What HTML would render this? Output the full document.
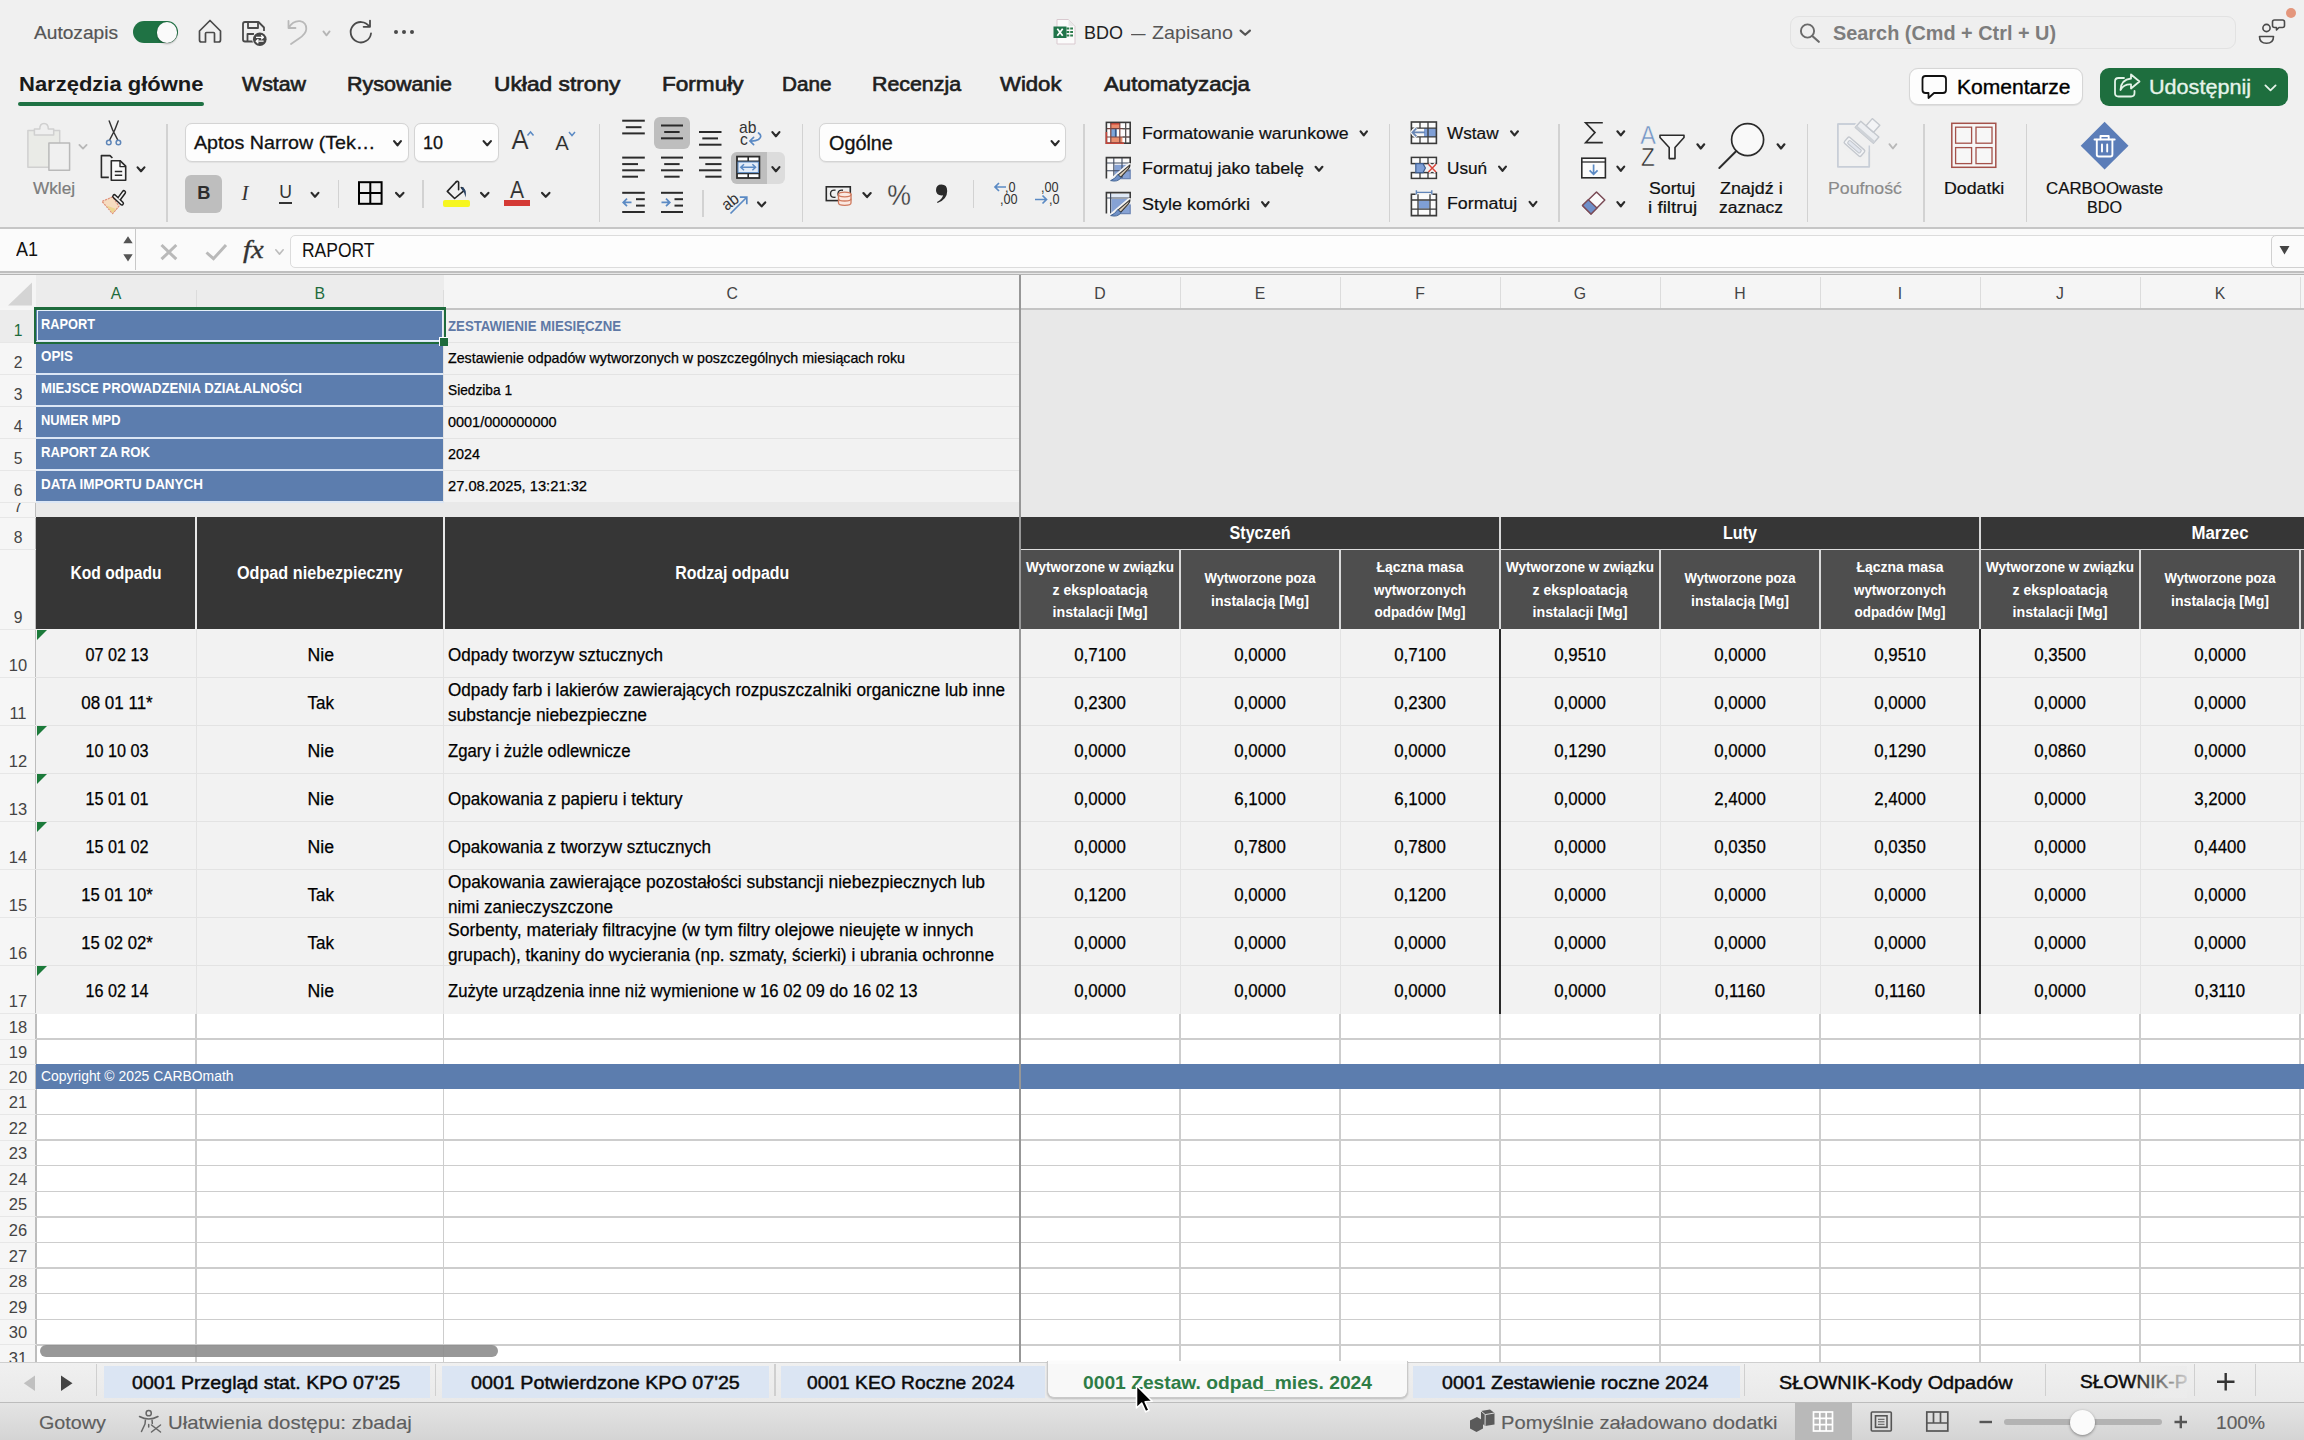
<!DOCTYPE html>
<html lang="pl"><head><meta charset="utf-8"><title>BDO</title>
<style>
html,body{margin:0;padding:0;}
body{width:2304px;height:1440px;overflow:hidden;background:#f0f0f0;font-family:"Liberation Sans",sans-serif;position:relative;}
.a{position:absolute;box-sizing:border-box;}
.t{white-space:nowrap;overflow:visible;}
.w{white-space:normal;}
.d{-webkit-text-stroke:.25px #000;}
svg{overflow:visible;}
</style></head><body>
<div class="a" style="left:0px;top:0px;width:2304px;height:228px;background:#f0f0f0;"></div>
<div class="a t " style="left:34px;top:20.8px;width:80.85269899359561px;height:24px;line-height:24px;font-size:17.5px;text-align:left;color:#555;font-weight:400;transform:scaleX(1.093);transform-origin:0 50%;-webkit-text-stroke:0.2px #555;">Autozapis</div>
<div class="a" style="left:133px;top:21px;width:45px;height:22px;background:#1f7244;border-radius:11px;"></div>
<div class="a" style="left:156.5px;top:22px;width:20.5px;height:20.5px;background:#fafafa;border-radius:50%;box-shadow:0 1px 2px rgba(0,0,0,.35);"></div>
<svg class="a" style="left:0px;top:0px;" width="1" height="1" viewBox="0 0 1 1"><path d="M199.5 31 L210 20.5 L220.5 31 L220.5 40 Q220.5 42 218.5 42 L214.5 42 L214.5 33.5 Q214.5 32.5 213.5 32.5 L206.5 32.5 Q205.5 32.5 205.5 33.5 L205.5 42 L201.5 42 Q199.5 42 199.5 40 Z" fill="none" stroke="#4a4a4a" stroke-width="1.7" stroke-linejoin="round"/></svg>
<svg class="a" style="left:0px;top:0px;" width="1" height="1" viewBox="0 0 1 1"><g fill="none" stroke="#4a4a4a" stroke-width="1.8" stroke-linejoin="round"><path d="M254 41.5 L245 41.5 Q243 41.5 243 39.5 L243 24 Q243 22 245 22 L258.5 22 L264 27.5 L264 31"/><path d="M248 22 L248 28 L258 28 L258 22"/><path d="M247.5 41.5 L247.5 34 L254 34"/></g><circle cx="259.8" cy="39.2" r="7.6" fill="#f0f0f0"/><circle cx="259.8" cy="39.2" r="6.8" fill="#474747"/><path d="M256 37.3 L263 37.3 M261.2 35.3 L263.4 37.3 L261.2 39.3 M263.6 41.2 L256.6 41.2 M258.4 39.2 L256.2 41.2 L258.4 43.2" fill="none" stroke="#fff" stroke-width="1.3" stroke-linejoin="round"/></svg>
<svg class="a" style="left:0px;top:0px;" width="1" height="1" viewBox="0 0 1 1"><path d="M288.5 21 L288.5 28 L295.5 28 M288.8 27.6 Q293 20.5 300 21.2 Q306.5 22.5 306.3 29 Q306 34 299 38.5 L291 44" fill="none" stroke="#b9b9b9" stroke-width="1.8" stroke-linecap="round" stroke-linejoin="round"/></svg>
<svg class="a" style="left:0px;top:0px;" width="1" height="1" viewBox="0 0 1 1"><path d="M323.40 31.40 L326.50 35.32 L329.60 31.40" fill="none" stroke="#b5b5b5" stroke-width="1.8" stroke-linecap="round" stroke-linejoin="round"/></svg>
<svg class="a" style="left:0px;top:0px;" width="1" height="1" viewBox="0 0 1 1"><path d="M369.4 26.6 A10.2 10.2 0 1 0 371 33.5 M363.6 26.8 L370 26.8 L370 20.6" fill="none" stroke="#4a4a4a" stroke-width="1.8" stroke-linecap="round" stroke-linejoin="round"/></svg>
<div class="a" style="left:393.5px;top:30px;width:4px;height:4px;background:#4a4a4a;border-radius:50%;"></div>
<div class="a" style="left:401.5px;top:30px;width:4px;height:4px;background:#4a4a4a;border-radius:50%;"></div>
<div class="a" style="left:409.5px;top:30px;width:4px;height:4px;background:#4a4a4a;border-radius:50%;"></div>
<svg class="a" style="left:0px;top:0px;" width="1" height="1" viewBox="0 0 1 1"><path d="M1057 19.5 L1068.5 19.5 L1075 26 L1075 44 L1057 44 Z" fill="#fbfbfb" stroke="#d9c9cf" stroke-width="1"/><path d="M1068.5 19.5 L1068.5 26 L1075 26 Z" fill="#e9e9e9"/><g fill="#2d7d4d"><rect x="1066.5" y="27.5" width="6.5" height="2"/><rect x="1066.5" y="31" width="6.5" height="2"/><rect x="1066.5" y="34.5" width="6.5" height="2"/></g><rect x="1069.3" y="27" width="0.9" height="10" fill="#fbfbfb"/><rect x="1053.5" y="26.5" width="13" height="11.5" fill="#20744a"/><path d="M1057.3 28.8 L1062.7 35.8 M1062.7 28.8 L1057.3 35.8" stroke="#fff" stroke-width="1.7"/></svg>
<div class="a t " style="left:1084px;top:21.3px;width:44.09046052631579px;height:24px;line-height:24px;font-size:18.5px;text-align:left;color:#222;font-weight:400;transform:scaleX(0.9728);transform-origin:0 50%;">BDO</div>
<div class="a t " style="left:1130.5px;top:21.3px;width:22.49961724929829px;height:24px;line-height:24px;font-size:18.5px;text-align:left;color:#555;font-weight:400;transform:scaleX(0.7838);transform-origin:0 50%;">—</div>
<div class="a t " style="left:1152px;top:21.3px;width:80.1063609884431px;height:24px;line-height:24px;font-size:18.5px;text-align:left;color:#555;font-weight:400;transform:scaleX(1.0643);transform-origin:0 50%;">Zapisano</div>
<svg class="a" style="left:0px;top:0px;" width="1" height="1" viewBox="0 0 1 1"><path d="M1240.60 30.60 L1245.25 34.78 L1249.90 30.60" fill="none" stroke="#555" stroke-width="2.2" stroke-linecap="round" stroke-linejoin="round"/></svg>
<div class="a" style="left:1789.5px;top:15.5px;width:446.5px;height:33px;background:#efefef;border:1px solid #e2e2e2;border-radius:9px;"></div>
<svg class="a" style="left:0px;top:0px;" width="1" height="1" viewBox="0 0 1 1"><circle cx="1807.5" cy="31" r="6.6" fill="none" stroke="#6a6a6a" stroke-width="1.9"/><path d="M1812.3 36 L1818.8 41.8" stroke="#6a6a6a" stroke-width="2.2" stroke-linecap="round"/></svg>
<div class="a t " style="left:1832.5px;top:21.3px;width:222.88496270121712px;height:24px;line-height:24px;font-size:19.5px;text-align:left;color:#7d7d7d;font-weight:700;transform:scaleX(1.0188);transform-origin:0 50%;">Search (Cmd + Ctrl + U)</div>
<svg class="a" style="left:0px;top:0px;" width="1" height="1" viewBox="0 0 1 1"><g fill="none" stroke="#4a4a4a" stroke-width="1.6" stroke-linejoin="round"><circle cx="2266.5" cy="28" r="3.6"/><path d="M2259.5 36.5 L2273.5 36.5 Q2273.5 43.3 2266.5 43.3 Q2259.5 43.3 2259.5 36.5 Z"/><path d="M2274.5 20 L2282.5 20 Q2284.5 20 2284.5 22 L2284.5 25.5 Q2284.5 27.5 2282.5 27.5 L2279 27.5 L2276.5 30 L2276.5 27.5 L2274.5 27.5 Q2272.5 27.5 2272.5 25.5 L2272.5 22 Q2272.5 20 2274.5 20 Z"/></g></svg>
<div class="a" style="left:2286px;top:8px;width:10px;height:10px;background:#e4967c;border-radius:50%;"></div>
<div class="a t " style="left:18.5px;top:70px;width:200px;height:28px;line-height:28px;font-size:20px;text-align:left;color:#1a1a1a;font-weight:700;transform:scaleX(1.0994);transform-origin:0 50%;">Narzędzia główne</div>
<div class="a" style="left:18px;top:101.5px;width:185.5px;height:4px;background:#1f7244;border-radius:2px;"></div>
<div class="a t " style="left:242px;top:69.8px;width:63.99812505859192px;height:28px;line-height:28px;font-size:20px;text-align:left;color:#1e1e1e;font-weight:400;transform:scaleX(1.0667);transform-origin:0 50%;-webkit-text-stroke:0.65px #1e1e1e;">Wstaw</div>
<div class="a t " style="left:347px;top:69.8px;width:101.82912512810958px;height:28px;line-height:28px;font-size:20px;text-align:left;color:#1e1e1e;font-weight:400;transform:scaleX(1.0733);transform-origin:0 50%;-webkit-text-stroke:0.65px #1e1e1e;">Rysowanie</div>
<div class="a t " style="left:493.5px;top:69.8px;width:115.15016255162114px;height:28px;line-height:28px;font-size:20px;text-align:left;color:#1e1e1e;font-weight:400;transform:scaleX(1.1381);transform-origin:0 50%;-webkit-text-stroke:0.65px #1e1e1e;">Układ strony</div>
<div class="a t " style="left:661.5px;top:69.8px;width:76.2325622618098px;height:28px;line-height:28px;font-size:20px;text-align:left;color:#1e1e1e;font-weight:400;transform:scaleX(1.1283);transform-origin:0 50%;-webkit-text-stroke:0.65px #1e1e1e;">Formuły</div>
<div class="a t " style="left:781.5px;top:69.8px;width:51.8122283396117px;height:28px;line-height:28px;font-size:20px;text-align:left;color:#1e1e1e;font-weight:400;transform:scaleX(1.0353);transform-origin:0 50%;-webkit-text-stroke:0.65px #1e1e1e;">Dane</div>
<div class="a t " style="left:871.5px;top:69.8px;width:87.38017612891139px;height:28px;line-height:28px;font-size:20px;text-align:left;color:#1e1e1e;font-weight:400;transform:scaleX(1.0674);transform-origin:0 50%;-webkit-text-stroke:0.65px #1e1e1e;">Recenzja</div>
<div class="a t " style="left:999.5px;top:69.8px;width:59.56559450668594px;height:28px;line-height:28px;font-size:20px;text-align:left;color:#1e1e1e;font-weight:400;transform:scaleX(1.1068);transform-origin:0 50%;-webkit-text-stroke:0.65px #1e1e1e;">Widok</div>
<div class="a t " style="left:1103.5px;top:69.8px;width:135.1769991015274px;height:28px;line-height:28px;font-size:20px;text-align:left;color:#1e1e1e;font-weight:400;transform:scaleX(1.113);transform-origin:0 50%;-webkit-text-stroke:0.65px #1e1e1e;">Automatyzacja</div>
<div class="a" style="left:1908.5px;top:68px;width:174px;height:37px;background:#fdfdfd;border:1px solid #d6d6d6;border-radius:9px;box-shadow:0 .5px 1px rgba(0,0,0,.08);"></div>
<svg class="a" style="left:0px;top:0px;" width="1" height="1" viewBox="0 0 1 1"><path d="M1925.5 76 L1943 76 Q1946 76 1946 79 L1946 90 Q1946 93 1943 93 L1934 93 L1928.5 98 L1928.5 93 L1925.5 93 Q1922.5 93 1922.5 90 L1922.5 79 Q1922.5 76 1925.5 76 Z" fill="none" stroke="#111" stroke-width="1.8" stroke-linejoin="round"/></svg>
<div class="a t " style="left:1957px;top:73.3px;width:111.83847980997625px;height:28px;line-height:28px;font-size:20px;text-align:left;color:#000;font-weight:400;transform:scaleX(1.0525);transform-origin:0 50%;-webkit-text-stroke:0.35px #000;">Komentarze</div>
<div class="a" style="left:2099.5px;top:67.5px;width:188px;height:38px;background:#1e6e3e;border-radius:9px;"></div>
<svg class="a" style="left:0px;top:0px;" width="1" height="1" viewBox="0 0 1 1"><g fill="none" stroke="#e4f3e8" stroke-width="1.8" stroke-linejoin="round" stroke-linecap="round"><path d="M2124 78 L2118.5 78 Q2115 78 2115 81.5 L2115 93 Q2115 96.5 2118.5 96.5 L2131 96.5 Q2134.5 96.5 2134.5 93 L2134.5 91"/><path d="M2131 74.5 L2139.5 81.5 L2131 88.5 L2131 84.5 Q2124 84 2120.5 90 Q2121 79.5 2131 78.5 Z"/></g></svg>
<div class="a t " style="left:2149px;top:73.3px;width:98.50569813768183px;height:28px;line-height:28px;font-size:20px;text-align:left;color:#e6f4ea;font-weight:400;transform:scaleX(1.0793);transform-origin:0 50%;-webkit-text-stroke:0.35px #e6f4ea;">Udostępnij</div>
<svg class="a" style="left:0px;top:0px;" width="1" height="1" viewBox="0 0 1 1"><path d="M2265.40 85.40 L2270.50 90.32 L2275.60 85.40" fill="none" stroke="#e6f4ea" stroke-width="1.8" stroke-linecap="round" stroke-linejoin="round"/></svg>
<svg class="a" style="left:0px;top:0px;" width="1" height="1" viewBox="0 0 1 1"><g stroke-width="1.5" stroke-linejoin="round"><path d="M27.9 130.4 L59.7 130.4 L59.7 167.2 L27.9 167.2 Z" fill="#eaebe7" stroke="#d0d0d0"/><path d="M34.4 135 L34.4 128.9 L39.8 128.9 Q39.8 123.5 44 123.5 Q48.3 123.5 48.3 128.9 L53.7 128.9 L53.7 135 Z" fill="#efefef" stroke="#d0d0d0"/><path d="M48.9 143.1 L69.6 143.1 L69.6 170.2 L48.9 170.2 Z" fill="#f0f0f0" stroke="#b9b9b9"/></g></svg>
<svg class="a" style="left:0px;top:0px;" width="1" height="1" viewBox="0 0 1 1"><path d="M79.40 144.90 L83.00 148.62 L86.60 144.90" fill="none" stroke="#b8b8b8" stroke-width="1.8" stroke-linecap="round" stroke-linejoin="round"/></svg>
<div class="a t " style="left:33px;top:176.8px;width:43.10978675854362px;height:24px;line-height:24px;font-size:16px;text-align:left;color:#7c7c7c;font-weight:400;transform:scaleX(1.0739);transform-origin:0 50%;-webkit-text-stroke:0.2px #7c7c7c;">Wklej</div>
<svg class="a" style="left:0px;top:0px;" width="1" height="1" viewBox="0 0 1 1"><g fill="none" stroke-linecap="round"><path d="M109.2 121 Q112 130 117.6 139.6 M118.2 121 Q115.4 130 109.8 139.6" stroke="#333" stroke-width="1.4"/><circle cx="108.8" cy="142.5" r="2.3" stroke="#5f86b8" stroke-width="1.5"/><circle cx="118.4" cy="142.5" r="2.3" stroke="#5f86b8" stroke-width="1.5"/></g></svg>
<svg class="a" style="left:0px;top:0px;" width="1" height="1" viewBox="0 0 1 1"><g fill="none" stroke="#2a2a2a" stroke-width="1.6" stroke-linejoin="round"><path d="M108.8 177.4 L101.4 177.4 L101.4 155.6 L110 155.6 L112.4 158"/><path d="M111.3 160.7 L120 160.7 L125.7 166.2 L125.7 180.3 L111.3 180.3 Z" fill="#f8f8f8"/><path d="M120 160.7 L120 166.6 L125.7 166.6" stroke-width="1.4"/><path d="M114.8 171.5 L122.2 171.5 M114.8 175.2 L122.2 175.2" stroke-width="1.5"/></g></svg>
<svg class="a" style="left:0px;top:0px;" width="1" height="1" viewBox="0 0 1 1"><path d="M137.60 167.40 L141.00 171.28 L144.40 167.40" fill="none" stroke="#2b2b2b" stroke-width="2.2" stroke-linecap="round" stroke-linejoin="round"/></svg>
<svg class="a" style="left:0px;top:0px;" width="1" height="1" viewBox="0 0 1 1"><path d="M112.6 196.9 L102 201.4 L112.6 213.6 L119 206.2 Z" fill="#f6dcc0" stroke="#df8f78" stroke-width="1.2" stroke-linejoin="round" stroke-dasharray="2.2 0.8"/><path d="M106.5 205.5 L112.6 213 L116 209 Z" fill="#ecd58f"/><g fill="none" stroke-linecap="round"><path d="M123.9 192.3 L119.3 198.6" stroke="#222" stroke-width="4.6"/><path d="M114.4 196.3 L121.8 203.3" stroke="#222" stroke-width="4.6"/><path d="M123.9 192.3 L119.3 198.6" stroke="#f4f4f4" stroke-width="1.7"/><path d="M114.4 196.3 L121.8 203.3" stroke="#f4f4f4" stroke-width="1.7"/></g></svg>
<div class="a" style="left:166.25px;top:123.5px;width:1.5px;height:98.0px;background:#d2d2d2;"></div>
<div class="a" style="left:184.5px;top:123px;width:224.5px;height:38.5px;background:#fdfdfd;border:1px solid #d4d4d4;border-radius:7px;box-shadow:0 .5px 1px rgba(0,0,0,.06);"></div>
<div class="a t " style="left:194px;top:129.8px;width:179.26071842410195px;height:26px;line-height:26px;font-size:19px;text-align:left;color:#111;font-weight:400;transform:scaleX(1.0356);transform-origin:0 50%;-webkit-text-stroke:0.3px #111;">Aptos Narrow (Tek…</div>
<svg class="a" style="left:0px;top:0px;" width="1" height="1" viewBox="0 0 1 1"><path d="M394.10 141.10 L397.50 145.28 L400.90 141.10" fill="none" stroke="#2b2b2b" stroke-width="2.2" stroke-linecap="round" stroke-linejoin="round"/></svg>
<div class="a" style="left:413.5px;top:123px;width:85px;height:38.5px;background:#fdfdfd;border:1px solid #d4d4d4;border-radius:7px;box-shadow:0 .5px 1px rgba(0,0,0,.06);"></div>
<div class="a t " style="left:422.5px;top:129.8px;width:25.134946634259748px;height:26px;line-height:26px;font-size:19px;text-align:left;color:#111;font-weight:400;transform:scaleX(0.9463);transform-origin:0 50%;-webkit-text-stroke:0.3px #111;">10</div>
<svg class="a" style="left:0px;top:0px;" width="1" height="1" viewBox="0 0 1 1"><path d="M483.60 141.10 L487.25 145.28 L490.90 141.10" fill="none" stroke="#2b2b2b" stroke-width="2.2" stroke-linecap="round" stroke-linejoin="round"/></svg>
<div class="a t " style="left:508px;top:125px;width:24px;height:30px;line-height:30px;font-size:27px;text-align:center;color:#2a2a2a;font-weight:400;transform:scaleX(0.95);transform-origin:50% 50%;line-height:30px;-webkit-text-stroke:.2px #f0f0f0;">A</div>
<svg class="a" style="left:0px;top:0px;" width="1" height="1" viewBox="0 0 1 1"><path d="M527.5 135.5 L530.5 132 L533.5 135.5" fill="none" stroke="#5b8ac4" stroke-width="1.5"/></svg>
<div class="a t " style="left:551px;top:129.5px;width:22px;height:26px;line-height:26px;font-size:21px;text-align:center;color:#2a2a2a;font-weight:400;transform:scaleX(0.97);transform-origin:50% 50%;-webkit-text-stroke:.15px #f0f0f0;">A</div>
<svg class="a" style="left:0px;top:0px;" width="1" height="1" viewBox="0 0 1 1"><path d="M569 132 L572 135.5 L575 132" fill="none" stroke="#5b8ac4" stroke-width="1.5"/></svg>
<div class="a" style="left:184.5px;top:174.5px;width:37.5px;height:38px;background:#bebebe;border-radius:6px;"></div>
<div class="a t " style="left:184.5px;top:180px;width:37.5px;height:26px;line-height:26px;font-size:19px;text-align:center;color:#2d2d2d;font-weight:700;transform:scaleX(0.96);transform-origin:50% 50%;">B</div>
<div class="a t " style="left:232px;top:180px;width:26px;height:26px;line-height:26px;font-size:21px;text-align:center;color:#333;font-weight:400;font-family:'Liberation Serif',serif;font-style:italic;">I</div>
<div class="a t " style="left:273px;top:179px;width:25px;height:26px;line-height:26px;font-size:18.5px;text-align:center;color:#333;font-weight:400;transform:scaleX(0.95);transform-origin:50% 50%;">U</div>
<div class="a" style="left:279px;top:202px;width:13px;height:1.6px;background:#333;"></div>
<svg class="a" style="left:0px;top:0px;" width="1" height="1" viewBox="0 0 1 1"><path d="M311.60 192.90 L315.00 196.78 L318.40 192.90" fill="none" stroke="#2b2b2b" stroke-width="2.2" stroke-linecap="round" stroke-linejoin="round"/></svg>
<div class="a" style="left:337.55px;top:179.5px;width:1.5px;height:28.0px;background:#d2d2d2;"></div>
<svg class="a" style="left:0px;top:0px;" width="1" height="1" viewBox="0 0 1 1"><g fill="none" stroke="#000" stroke-width="2"><rect x="359" y="182.2" width="22.6" height="21.6"/><path d="M370.3 182.2 L370.3 203.8 M359 193 L381.6 193"/></g></svg>
<svg class="a" style="left:0px;top:0px;" width="1" height="1" viewBox="0 0 1 1"><path d="M396.10 192.90 L399.75 196.78 L403.40 192.90" fill="none" stroke="#2b2b2b" stroke-width="2.2" stroke-linecap="round" stroke-linejoin="round"/></svg>
<div class="a" style="left:422.25px;top:179.5px;width:1.5px;height:28.0px;background:#d2d2d2;"></div>
<svg class="a" style="left:0px;top:0px;" width="1" height="1" viewBox="0 0 1 1"><g fill="none" stroke="#222" stroke-width="1.6" stroke-linejoin="round" stroke-linecap="round"><path d="M455.8 182.3 L447.3 191.4 L454.6 198.5 L464.3 190.3 L461.3 187.5"/><path d="M455.8 182.3 Q457.2 180.1 458.6 182.3 L458.6 189.8"/></g><path d="M462.2 187.3 Q467 189 465.6 197.4 Q464.6 192.2 461.8 189.4 Z" fill="#2d4565"/><circle cx="462.6" cy="188.3" r="1.2" fill="#2d4565"/></svg>
<div class="a" style="left:443px;top:199.6px;width:27.4px;height:7px;background:#f6f620;border-radius:2px;"></div>
<svg class="a" style="left:0px;top:0px;" width="1" height="1" viewBox="0 0 1 1"><path d="M481.10 192.90 L484.75 196.78 L488.40 192.90" fill="none" stroke="#2b2b2b" stroke-width="2.2" stroke-linecap="round" stroke-linejoin="round"/></svg>
<div class="a t " style="left:505px;top:178.2px;width:24px;height:24px;line-height:24px;font-size:23.5px;text-align:center;color:#2e2e2e;font-weight:400;transform:scaleX(0.9);transform-origin:50% 50%;-webkit-text-stroke:.15px #f0f0f0;">A</div>
<div class="a" style="left:504.2px;top:200px;width:25.8px;height:6px;background:#d43a35;"></div>
<svg class="a" style="left:0px;top:0px;" width="1" height="1" viewBox="0 0 1 1"><path d="M542.10 192.90 L545.75 196.78 L549.40 192.90" fill="none" stroke="#2b2b2b" stroke-width="2.2" stroke-linecap="round" stroke-linejoin="round"/></svg>
<div class="a" style="left:598.75px;top:123.5px;width:1.5px;height:98.0px;background:#d2d2d2;"></div>
<div class="a" style="left:654px;top:117px;width:35.5px;height:31.8px;background:#bebebe;border-radius:6px;"></div>
<svg class="a" style="left:0px;top:0px;" width="1" height="1" viewBox="0 0 1 1"><path d="M622.2 120.7 L644.8 120.7" stroke="#2b2b2b" stroke-width="2"/><path d="M625.8 127.2 L641.5 127.2" stroke="#2b2b2b" stroke-width="2"/><path d="M622.2 133.4 L644.8 133.4" stroke="#2b2b2b" stroke-width="2"/></svg>
<svg class="a" style="left:0px;top:0px;" width="1" height="1" viewBox="0 0 1 1"><path d="M661 125.5 L683 125.5" stroke="#2b2b2b" stroke-width="2"/><path d="M664.2 132 L679.6 132" stroke="#2b2b2b" stroke-width="2"/><path d="M661 138.3 L683 138.3" stroke="#2b2b2b" stroke-width="2"/></svg>
<svg class="a" style="left:0px;top:0px;" width="1" height="1" viewBox="0 0 1 1"><path d="M699 132 L721.5 132" stroke="#2b2b2b" stroke-width="2"/><path d="M702.3 138.4 L718 138.4" stroke="#2b2b2b" stroke-width="2"/><path d="M699 144.7 L721.5 144.7" stroke="#2b2b2b" stroke-width="2"/></svg>
<svg class="a" style="left:0px;top:0px;" width="1" height="1" viewBox="0 0 1 1"><path d="M622.2 157.6 L644.8 157.6" stroke="#2b2b2b" stroke-width="2"/><path d="M622.2 164.1 L638 164.1" stroke="#2b2b2b" stroke-width="2"/><path d="M622.2 170.3 L644.8 170.3" stroke="#2b2b2b" stroke-width="2"/><path d="M622.2 176.7 L638 176.7" stroke="#2b2b2b" stroke-width="2"/></svg>
<svg class="a" style="left:0px;top:0px;" width="1" height="1" viewBox="0 0 1 1"><path d="M661 157.6 L683 157.6" stroke="#2b2b2b" stroke-width="2"/><path d="M664.2 164.1 L679.6 164.1" stroke="#2b2b2b" stroke-width="2"/><path d="M661 170.3 L683 170.3" stroke="#2b2b2b" stroke-width="2"/><path d="M664.2 176.7 L679.6 176.7" stroke="#2b2b2b" stroke-width="2"/></svg>
<svg class="a" style="left:0px;top:0px;" width="1" height="1" viewBox="0 0 1 1"><path d="M699 157.6 L721.5 157.6" stroke="#2b2b2b" stroke-width="2"/><path d="M705.3 164.1 L721.5 164.1" stroke="#2b2b2b" stroke-width="2"/><path d="M699 170.3 L721.5 170.3" stroke="#2b2b2b" stroke-width="2"/><path d="M705.3 176.7 L721.5 176.7" stroke="#2b2b2b" stroke-width="2"/></svg>
<svg class="a" style="left:0px;top:0px;" width="1" height="1" viewBox="0 0 1 1"><path d="M622.2 192.8 L644.8 192.8" stroke="#2b2b2b" stroke-width="2"/><path d="M636 199.2 L644.8 199.2" stroke="#2b2b2b" stroke-width="2"/><path d="M636 205.6 L644.8 205.6" stroke="#2b2b2b" stroke-width="2"/><path d="M622.2 212 L644.8 212" stroke="#2b2b2b" stroke-width="2"/></svg>
<svg class="a" style="left:0px;top:0px;" width="1" height="1" viewBox="0 0 1 1"><path d="M661 192.8 L683 192.8" stroke="#2b2b2b" stroke-width="2"/><path d="M674.5 199.2 L683 199.2" stroke="#2b2b2b" stroke-width="2"/><path d="M674.5 205.6 L683 205.6" stroke="#2b2b2b" stroke-width="2"/><path d="M661 212 L683 212" stroke="#2b2b2b" stroke-width="2"/></svg>
<svg class="a" style="left:0px;top:0px;" width="1" height="1" viewBox="0 0 1 1"><path d="M631.5 202.4 L623.5 202.4 M627 198.6 L623.2 202.4 L627 206.2" fill="none" stroke="#5b8ac4" stroke-width="1.7"/><path d="M661.5 202.4 L669.5 202.4 M666 198.6 L669.8 202.4 L666 206.2" fill="none" stroke="#5b8ac4" stroke-width="1.7"/></svg>
<div class="a" style="left:702.25px;top:189.5px;width:1.5px;height:27.19999999999999px;background:#d2d2d2;"></div>
<div class="a t " style="left:739px;top:118.5px;width:24px;height:18px;line-height:18px;font-size:17px;text-align:left;color:#333;font-weight:400;transform:scaleX(0.92);transform-origin:0 50%;">ab</div>
<div class="a t " style="left:739.5px;top:130.5px;width:12px;height:18px;line-height:18px;font-size:17px;text-align:left;color:#333;font-weight:400;transform:scaleX(0.92);transform-origin:0 50%;">c</div>
<svg class="a" style="left:0px;top:0px;" width="1" height="1" viewBox="0 0 1 1"><path d="M758.5 133 Q763 136 758.5 139.5 Q755.5 141.3 750 141 M753.6 137.4 L749.8 141 L753.6 144.6" fill="none" stroke="#5b8ac4" stroke-width="1.7" stroke-linecap="round" stroke-linejoin="round"/></svg>
<svg class="a" style="left:0px;top:0px;" width="1" height="1" viewBox="0 0 1 1"><path d="M772.40 132.10 L775.90 136.28 L779.40 132.10" fill="none" stroke="#2b2b2b" stroke-width="2.2" stroke-linecap="round" stroke-linejoin="round"/></svg>
<div class="a" style="left:731px;top:152.3px;width:54px;height:31.5px;background:#dcdcdc;border-radius:6px;"></div>
<div class="a" style="left:731px;top:152.3px;width:35.5px;height:31.5px;background:#bebebe;border-radius:6px 0 0 6px;"></div>
<svg class="a" style="left:0px;top:0px;" width="1" height="1" viewBox="0 0 1 1"><rect x="737" y="156.6" width="22.4" height="21.4" fill="#fff" stroke="#2b2b2b" stroke-width="1.8"/><path d="M737 161.2 L759.4 161.2 M737 173.4 L759.4 173.4 M748.2 156.6 L748.2 161.2 M748.2 173.4 L748.2 178" stroke="#2b2b2b" stroke-width="1.6" fill="none"/><rect x="738" y="162" width="20.4" height="10.6" fill="#e3ecf8" stroke="#5b8ac4" stroke-width="1"/><path d="M741 167.3 L755.4 167.3 M744 164.3 L740.8 167.3 L744 170.3 M752.4 164.3 L755.6 167.3 L752.4 170.3" fill="none" stroke="#5b8ac4" stroke-width="1.5"/></svg>
<svg class="a" style="left:0px;top:0px;" width="1" height="1" viewBox="0 0 1 1"><path d="M772.40 167.10 L775.90 171.28 L779.40 167.10" fill="none" stroke="#2b2b2b" stroke-width="2.2" stroke-linecap="round" stroke-linejoin="round"/></svg>
<div class="a t" style="left:719px;top:188px;width:30px;height:20px;line-height:20px;font-size:16.5px;color:#333;transform:rotate(-38deg) scaleX(.92);transform-origin:50% 50%;">ab</div>
<svg class="a" style="left:0px;top:0px;" width="1" height="1" viewBox="0 0 1 1"><path d="M730.5 213.5 L746.5 197.5 M739.8 197.2 L746.8 197.2 L746.8 204.2" fill="none" stroke="#5b8ac4" stroke-width="1.7"/></svg>
<svg class="a" style="left:0px;top:0px;" width="1" height="1" viewBox="0 0 1 1"><path d="M758.10 202.40 L761.65 206.38 L765.20 202.40" fill="none" stroke="#2b2b2b" stroke-width="2.2" stroke-linecap="round" stroke-linejoin="round"/></svg>
<div class="a" style="left:801.55px;top:123.5px;width:1.5px;height:98.0px;background:#d2d2d2;"></div>
<div class="a" style="left:819.2px;top:123px;width:247px;height:38.5px;background:#fdfdfd;border:1px solid #d4d4d4;border-radius:7px;box-shadow:0 .5px 1px rgba(0,0,0,.06);"></div>
<div class="a t " style="left:829.2px;top:129.8px;width:66.88192391090081px;height:26px;line-height:26px;font-size:19.5px;text-align:left;color:#111;font-weight:400;transform:scaleX(1.0146);transform-origin:0 50%;-webkit-text-stroke:0.3px #111;">Ogólne</div>
<svg class="a" style="left:0px;top:0px;" width="1" height="1" viewBox="0 0 1 1"><path d="M1051.60 141.10 L1055.15 145.28 L1058.70 141.10" fill="none" stroke="#2b2b2b" stroke-width="2.2" stroke-linecap="round" stroke-linejoin="round"/></svg>
<svg class="a" style="left:0px;top:0px;" width="1" height="1" viewBox="0 0 1 1"><rect x="826.3" y="186.8" width="24" height="13.8" fill="none" stroke="#2b2b2b" stroke-width="1.6"/><path d="M835.5 190.3 Q830.5 189.5 830.5 193.7 Q830.5 198 835.5 197.2 M843 190.3 Q838 189.5 838 193.7 Q838 198 843 197.2" fill="none" stroke="#2b2b2b" stroke-width="1.4"/><g fill="#fbe9e2" stroke="#cf7a5f" stroke-width="1.3"><path d="M838.5 194.5 L838.5 203 Q838.5 205.3 844.7 205.3 Q851 205.3 851 203 L851 194.5 Z"/><ellipse cx="844.75" cy="194.5" rx="6.25" ry="2.3"/><path d="M838.5 198.8 Q838.5 201 844.7 201 Q851 201 851 198.8" fill="none"/></g></svg>
<svg class="a" style="left:0px;top:0px;" width="1" height="1" viewBox="0 0 1 1"><path d="M863.40 193.10 L867.05 197.08 L870.70 193.10" fill="none" stroke="#2b2b2b" stroke-width="2.2" stroke-linecap="round" stroke-linejoin="round"/></svg>
<div class="a t " style="left:884px;top:180px;width:30px;height:30px;line-height:30px;font-size:29px;text-align:center;color:#3a3a3a;font-weight:400;transform:scaleX(0.92);transform-origin:50% 50%;line-height:30px;-webkit-text-stroke:.3px #f0f0f0;">%</div>
<svg class="a" style="left:0px;top:0px;" width="1" height="1" viewBox="0 0 1 1"><path d="M941.5 184.6 Q947.2 184.6 947.2 191 Q947.2 199.5 937.5 203 L937 202 Q942.5 199 943 195.3 Q936 196 936 190.3 Q936 184.6 941.5 184.6 Z" fill="#2b2b2b"/></svg>
<div class="a" style="left:972.65px;top:179.5px;width:1.5px;height:28.0px;background:#d2d2d2;"></div>
<div class="a t " style="left:1005px;top:179.5px;width:30px;height:14px;line-height:14px;font-size:15.5px;text-align:left;color:#333;font-weight:400;transform:scaleX(0.82);transform-origin:0 50%;line-height:14px;">,0</div>
<div class="a t " style="left:999.5px;top:192px;width:30px;height:14px;line-height:14px;font-size:15.5px;text-align:left;color:#333;font-weight:400;transform:scaleX(0.82);transform-origin:0 50%;line-height:14px;">,00</div>
<svg class="a" style="left:0px;top:0px;" width="1" height="1" viewBox="0 0 1 1"><path d="M1006 187 L995 187 M999 183 L995 187 L999 191" fill="none" stroke="#5b8ac4" stroke-width="1.7"/></svg>
<div class="a t " style="left:1041px;top:179.5px;width:30px;height:14px;line-height:14px;font-size:15.5px;text-align:left;color:#333;font-weight:400;transform:scaleX(0.82);transform-origin:0 50%;line-height:14px;">,00</div>
<div class="a t " style="left:1048.5px;top:192px;width:30px;height:14px;line-height:14px;font-size:15.5px;text-align:left;color:#333;font-weight:400;transform:scaleX(0.82);transform-origin:0 50%;line-height:14px;">,0</div>
<svg class="a" style="left:0px;top:0px;" width="1" height="1" viewBox="0 0 1 1"><path d="M1035 199.5 L1046.5 199.5 M1042.5 195.5 L1046.5 199.5 L1042.5 203.5" fill="none" stroke="#5b8ac4" stroke-width="1.7"/></svg>
<div class="a" style="left:1083.45px;top:123.5px;width:1.5px;height:98.0px;background:#d2d2d2;"></div>
<svg class="a" style="left:0px;top:0px;" width="1" height="1" viewBox="0 0 1 1"><rect x="1106.4" y="122.4" width="23.8" height="20.8" fill="#fdfdfd"/><rect x="1110.8" y="122.4" width="9" height="6.2" fill="#e98a6c"/><rect x="1110.8" y="122.4" width="9" height="2.2" fill="#d84c3c"/><rect x="1110.8" y="128.6" width="5.6" height="8.4" fill="#7ea6da"/><rect x="1114.9" y="128.6" width="1.7" height="8.4" fill="#34588a"/><rect x="1110.8" y="137" width="11.6" height="6.2" fill="#e9906f"/><path d="M1110.8 122.4 L1110.8 143.2 M1119.8 122.4 L1119.8 143.2 M1125.6 122.4 L1125.6 143.2 M1106.4 128.6 L1130.2 128.6 M1106.4 137 L1130.2 137" stroke="#7a4540" stroke-width="1.2" fill="none"/><path d="M1122.6 128.6 L1130.2 128.6 M1122.6 137 L1130.2 137 M1125.6 122.4 L1125.6 143.2" stroke="#555" stroke-width="1.1" fill="none"/><rect x="1106.4" y="122.4" width="23.8" height="20.8" fill="none" stroke="#3a3a3a" stroke-width="1.6"/><path d="M1106.4 132 L1106.4 143.2 L1124 143.2" fill="none" stroke="#c5453a" stroke-width="1.6"/></svg>
<svg class="a" style="left:0px;top:0px;" width="1" height="1" viewBox="0 0 1 1"><rect x="1106.4" y="157.6" width="23.8" height="21" fill="#fbfbfb"/><rect x="1114.4" y="164.8" width="15.8" height="13.8" fill="#86a2d4"/><path d="M1106.4 163 L1130.2 163 M1106.4 170.8 L1130.2 170.8 M1113.8 157.6 L1113.8 178.6 M1122 157.6 L1122 178.6" stroke="#3f4a5f" stroke-width="1.1" fill="none"/><path d="M1106.4 178.6 L1106.4 157.6 L1130.2 157.6 L1130.2 164.6" fill="none" stroke="#3a3a3a" stroke-width="1.6"/><path d="M1130.2 169.6 L1130.2 178.6 L1120 178.6" fill="none" stroke="#6d86b4" stroke-width="1.2"/><path d="M1129.4 165.79999999999998 L1113 179.79999999999998" stroke="#f4f4f4" stroke-width="5.4" stroke-linecap="round" fill="none"/><path d="M1130 164.79999999999998 L1118.2 174.79999999999998 L1120.6 177.4 L1128.2 169.2 Q1130.2 166.6 1130 164.79999999999998 Z" fill="#d9cbb6" stroke="#333" stroke-width="1.1" stroke-linejoin="round"/><path d="M1117.8 174.6 L1121 177.79999999999998 Q1117.4 182.4 1110.6 180.6 Q1115 179.0 1117.8 174.6 Z" fill="#6f90c6" stroke="#3c5f8f" stroke-width="0.9"/></svg>
<svg class="a" style="left:0px;top:0px;" width="1" height="1" viewBox="0 0 1 1"><rect x="1106.4" y="192.6" width="23.8" height="21" fill="#fbfbfb"/><rect x="1111.4" y="199" width="18.8" height="14.6" fill="#86a2d4"/><rect x="1111.4" y="194" width="18" height="3.2" fill="#dfe9f7"/><path d="M1106.4 198 L1130.2 198 M1110.6 192.6 L1110.6 213.6" stroke="#3f4a5f" stroke-width="1.2" fill="none"/><path d="M1106.4 213.6 L1106.4 192.6 L1130.2 192.6 L1130.2 199.6" fill="none" stroke="#3a3a3a" stroke-width="1.6"/><path d="M1130.2 204.6 L1130.2 213.6 L1120 213.6" fill="none" stroke="#6d86b4" stroke-width="1.2"/><path d="M1129.4 200.79999999999998 L1113 214.79999999999998" stroke="#f4f4f4" stroke-width="5.4" stroke-linecap="round" fill="none"/><path d="M1130 199.79999999999998 L1118.2 209.79999999999998 L1120.6 212.4 L1128.2 204.2 Q1130.2 201.6 1130 199.79999999999998 Z" fill="#d9cbb6" stroke="#333" stroke-width="1.1" stroke-linejoin="round"/><path d="M1117.8 209.6 L1121 212.79999999999998 Q1117.4 217.4 1110.6 215.6 Q1115 214.0 1117.8 209.6 Z" fill="#6f90c6" stroke="#3c5f8f" stroke-width="0.9"/></svg>
<div class="a t " style="left:1141.5px;top:121.8px;width:190.74262977030207px;height:24px;line-height:24px;font-size:16px;text-align:left;color:#111;font-weight:400;transform:scaleX(1.1058);transform-origin:0 50%;-webkit-text-stroke:0.2px #111;">Formatowanie warunkowe</div>
<svg class="a" style="left:0px;top:0px;" width="1" height="1" viewBox="0 0 1 1"><path d="M1360.60 131.30 L1363.75 135.38 L1366.90 131.30" fill="none" stroke="#2b2b2b" stroke-width="2.2" stroke-linecap="round" stroke-linejoin="round"/></svg>
<div class="a t " style="left:1141.5px;top:157.3px;width:148.96644295302013px;height:24px;line-height:24px;font-size:16px;text-align:left;color:#111;font-weight:400;transform:scaleX(1.1175);transform-origin:0 50%;-webkit-text-stroke:0.2px #111;">Formatuj jako tabelę</div>
<svg class="a" style="left:0px;top:0px;" width="1" height="1" viewBox="0 0 1 1"><path d="M1315.60 166.80 L1319.00 170.78 L1322.40 166.80" fill="none" stroke="#2b2b2b" stroke-width="2.2" stroke-linecap="round" stroke-linejoin="round"/></svg>
<div class="a t " style="left:1141.5px;top:192.8px;width:100.0256068284876px;height:24px;line-height:24px;font-size:16px;text-align:left;color:#111;font-weight:400;transform:scaleX(1.1247);transform-origin:0 50%;-webkit-text-stroke:0.2px #111;">Style komórki</div>
<svg class="a" style="left:0px;top:0px;" width="1" height="1" viewBox="0 0 1 1"><path d="M1262.10 202.10 L1265.35 206.28 L1268.60 202.10" fill="none" stroke="#2b2b2b" stroke-width="2.2" stroke-linecap="round" stroke-linejoin="round"/></svg>
<div class="a" style="left:1388.75px;top:123.5px;width:1.5px;height:98.0px;background:#d2d2d2;"></div>
<svg class="a" style="left:0px;top:0px;" width="1" height="1" viewBox="0 0 1 1"><rect x="1411.4" y="122" width="25" height="21.4" fill="#fbfbfb"/><rect x="1424" y="128.2" width="12.4" height="8.7" fill="#7f9fd6"/><path d="M1420 122 L1420 128.2 M1428 122 L1428 143.4 M1420 136.9 L1420 143.4 M1411.4 128.2 L1436.4 128.2 M1411.4 136.9 L1436.4 136.9" stroke="#3a3a3a" stroke-width="1.3" fill="none"/><rect x="1411.4" y="122" width="25" height="21.4" fill="none" stroke="#3a3a3a" stroke-width="1.6"/><path d="M1424 132.4 L1412.6 132.4 M1416.6 128 L1412.2 132.4 L1416.6 136.8" fill="none" stroke="#f4f4f4" stroke-width="4" stroke-linejoin="round"/><path d="M1425 132.4 L1412.6 132.4 M1416.4 128.4 L1412.4 132.4 L1416.4 136.4" fill="none" stroke="#6886b4" stroke-width="1.7"/></svg>
<div class="a t " style="left:1446.8px;top:122.10000000000001px;width:52.00000000000013px;height:24px;line-height:24px;font-size:16px;text-align:left;color:#111;font-weight:400;transform:scaleX(1.075);transform-origin:0 50%;-webkit-text-stroke:0.2px #111;">Wstaw</div>
<svg class="a" style="left:0px;top:0px;" width="1" height="1" viewBox="0 0 1 1"><path d="M1511.10 131.30 L1514.50 135.38 L1517.90 131.30" fill="none" stroke="#2b2b2b" stroke-width="2.2" stroke-linecap="round" stroke-linejoin="round"/></svg>
<svg class="a" style="left:0px;top:0px;" width="1" height="1" viewBox="0 0 1 1"><rect x="1411.4" y="157.4" width="25" height="6.2" fill="#fbfbfb" stroke="#3a3a3a" stroke-width="1.5"/><rect x="1411.4" y="172.6" width="25" height="5.8" fill="#fbfbfb" stroke="#3a3a3a" stroke-width="1.5"/><path d="M1420 157.4 L1420 163.6 M1428 157.4 L1428 163.6 M1420 172.6 L1420 178.4 M1428 172.6 L1428 178.4" stroke="#3a3a3a" stroke-width="1.3" fill="none"/><path d="M1415.8 163.6 L1423 163.6 L1425.4 168 L1423 172.6 L1415.8 172.6 Z" fill="#7f9fd6" stroke="#3f5f92" stroke-width="1.2"/><path d="M1428.4 164.2 L1436 172 M1436 164.2 L1428.4 172" stroke="#f4f4f4" stroke-width="4"/><path d="M1428.4 164.2 L1436 172 M1436 164.2 L1428.4 172" stroke="#d8473c" stroke-width="1.5"/></svg>
<div class="a t " style="left:1446.8px;top:157.10000000000002px;width:41.350181176252015px;height:24px;line-height:24px;font-size:16px;text-align:left;color:#111;font-weight:400;transform:scaleX(1.0763);transform-origin:0 50%;-webkit-text-stroke:0.2px #111;">Usuń</div>
<svg class="a" style="left:0px;top:0px;" width="1" height="1" viewBox="0 0 1 1"><path d="M1499.10 166.60 L1502.50 170.78 L1505.90 166.60" fill="none" stroke="#2b2b2b" stroke-width="2.2" stroke-linecap="round" stroke-linejoin="round"/></svg>
<svg class="a" style="left:0px;top:0px;" width="1" height="1" viewBox="0 0 1 1"><rect x="1411.4" y="194.2" width="25" height="21.4" fill="#fbfbfb"/><rect x="1418.6" y="200.6" width="10.8" height="8" fill="#7f9fd6"/><path d="M1418 194.2 L1418 215.6 M1430 194.2 L1430 215.6 M1411.4 200 L1436.4 200 M1411.4 209.2 L1436.4 209.2" stroke="#3a3a3a" stroke-width="1.3" fill="none"/><path d="M1415.6 194.2 L1411.4 194.2 L1411.4 215.6 L1436.4 215.6 L1436.4 194.2 L1432.4 194.2" fill="none" stroke="#3a3a3a" stroke-width="1.6"/><path d="M1416.4 192.4 L1431.8 192.4 M1416.4 190.2 L1416.4 194.4 M1431.8 190.2 L1431.8 194.4" stroke="#5f84b8" stroke-width="1.4" fill="none"/></svg>
<div class="a t " style="left:1446.8px;top:192.4px;width:67.1238198003777px;height:24px;line-height:24px;font-size:16px;text-align:left;color:#111;font-weight:400;transform:scaleX(1.1121);transform-origin:0 50%;-webkit-text-stroke:0.2px #111;">Formatuj</div>
<svg class="a" style="left:0px;top:0px;" width="1" height="1" viewBox="0 0 1 1"><path d="M1529.60 201.90 L1533.00 206.08 L1536.40 201.90" fill="none" stroke="#2b2b2b" stroke-width="2.2" stroke-linecap="round" stroke-linejoin="round"/></svg>
<div class="a" style="left:1558.35px;top:123.5px;width:1.5px;height:98.0px;background:#d2d2d2;"></div>
<svg class="a" style="left:0px;top:0px;" width="1" height="1" viewBox="0 0 1 1"><path d="M1602.8 122.8 L1585.6 122.8 L1595 132.6 L1585.6 142.6 L1602.8 142.6" fill="none" stroke="#2b2b2b" stroke-width="1.6" stroke-linejoin="miter"/></svg>
<svg class="a" style="left:0px;top:0px;" width="1" height="1" viewBox="0 0 1 1"><path d="M1617.40 131.30 L1620.80 135.38 L1624.20 131.30" fill="none" stroke="#2b2b2b" stroke-width="2.2" stroke-linecap="round" stroke-linejoin="round"/></svg>
<svg class="a" style="left:0px;top:0px;" width="1" height="1" viewBox="0 0 1 1"><rect x="1581.8" y="158.2" width="23.6" height="19.6" fill="#fbfbfb" stroke="#2b2b2b" stroke-width="1.6"/><path d="M1581.8 162 L1605.4 162" stroke="#2b2b2b" stroke-width="1.3"/><path d="M1593.6 164.5 L1593.6 174.2 M1589.6 170.4 L1593.6 174.4 L1597.6 170.4" fill="none" stroke="#5b8ac4" stroke-width="1.7"/></svg>
<svg class="a" style="left:0px;top:0px;" width="1" height="1" viewBox="0 0 1 1"><path d="M1617.40 166.60 L1620.80 170.78 L1624.20 166.60" fill="none" stroke="#2b2b2b" stroke-width="2.2" stroke-linecap="round" stroke-linejoin="round"/></svg>
<svg class="a" style="left:0px;top:0px;" width="1" height="1" viewBox="0 0 1 1"><path d="M1582.5 205.5 L1596.5 192 L1604.8 200 L1591 214 Z" fill="#fbfbfb" stroke="#7a4a55" stroke-width="1.5" stroke-linejoin="round"/><path d="M1582.5 205.5 L1588.3 199.8 L1597 208 L1591 214 Z" fill="#6f8fc9" stroke="#7a4a55" stroke-width="1.3" stroke-linejoin="round"/></svg>
<svg class="a" style="left:0px;top:0px;" width="1" height="1" viewBox="0 0 1 1"><path d="M1617.40 202.10 L1620.80 206.28 L1624.20 202.10" fill="none" stroke="#2b2b2b" stroke-width="2.2" stroke-linecap="round" stroke-linejoin="round"/></svg>
<div class="a t " style="left:1638px;top:122.5px;width:20px;height:24px;line-height:24px;font-size:25.5px;text-align:center;color:#6f92c4;font-weight:400;transform:scaleX(0.92);transform-origin:50% 50%;line-height:24px;-webkit-text-stroke:.5px #f0f0f0;">A</div>
<div class="a t " style="left:1638px;top:144.5px;width:20px;height:24px;line-height:24px;font-size:25px;text-align:center;color:#2e2e2e;font-weight:400;transform:scaleX(0.9);transform-origin:50% 50%;line-height:24px;-webkit-text-stroke:.45px #f0f0f0;">Z</div>
<svg class="a" style="left:0px;top:0px;" width="1" height="1" viewBox="0 0 1 1"><path d="M1660 135.2 L1684 135.2 L1684 137.5 L1675 147.5 L1675 158.6 L1669.2 158.6 L1669.2 147.5 L1660 137.5 Z" fill="#f7f7f7" stroke="#2b2b2b" stroke-width="1.6" stroke-linejoin="round"/></svg>
<svg class="a" style="left:0px;top:0px;" width="1" height="1" viewBox="0 0 1 1"><path d="M1697.40 144.30 L1700.80 148.48 L1704.20 144.30" fill="none" stroke="#2b2b2b" stroke-width="2.2" stroke-linecap="round" stroke-linejoin="round"/></svg>
<div class="a t " style="left:1648.7px;top:176.8px;width:45.798320844994095px;height:24px;line-height:24px;font-size:16px;text-align:left;color:#111;font-weight:400;transform:scaleX(1.1077);transform-origin:0 50%;-webkit-text-stroke:0.2px #111;">Sortuj</div>
<div class="a t " style="left:1647.5px;top:195.8px;width:45.77989130434786px;height:24px;line-height:24px;font-size:16px;text-align:left;color:#111;font-weight:400;transform:scaleX(1.1776);transform-origin:0 50%;-webkit-text-stroke:0.2px #111;">i filtruj</div>
<svg class="a" style="left:0px;top:0px;" width="1" height="1" viewBox="0 0 1 1"><circle cx="1747.6" cy="139.6" r="16" fill="#f9f9f9" stroke="#2b2b2b" stroke-width="1.7"/><path d="M1736.3 151 L1719.3 168" stroke="#2b2b2b" stroke-width="1.9" stroke-linecap="round"/></svg>
<svg class="a" style="left:0px;top:0px;" width="1" height="1" viewBox="0 0 1 1"><path d="M1777.60 144.30 L1781.00 148.48 L1784.40 144.30" fill="none" stroke="#2b2b2b" stroke-width="2.2" stroke-linecap="round" stroke-linejoin="round"/></svg>
<div class="a t " style="left:1720px;top:176.8px;width:60.02291032754601px;height:24px;line-height:24px;font-size:16px;text-align:left;color:#111;font-weight:400;transform:scaleX(1.1174);transform-origin:0 50%;-webkit-text-stroke:0.2px #111;">Znajdź i</div>
<div class="a t " style="left:1719px;top:195.8px;width:62.694057226705795px;height:24px;line-height:24px;font-size:16px;text-align:left;color:#111;font-weight:400;transform:scaleX(1.0904);transform-origin:0 50%;-webkit-text-stroke:0.2px #111;">zaznacz</div>
<div class="a" style="left:1806.55px;top:123.5px;width:1.5px;height:98.0px;background:#d2d2d2;"></div>
<svg class="a" style="left:0px;top:0px;" width="1" height="1" viewBox="0 0 1 1"><path d="M1837.8 124 L1869.3 124 L1869.3 166.8 L1837.8 166.8 Z" fill="#f1f1f1" stroke="#c8ced7" stroke-width="1.5" stroke-linejoin="round"/><g transform="translate(1867.2 132.1) rotate(-49)" stroke-linejoin="round"><rect x="-27" y="-14" width="42" height="28" fill="#f0f0f0" stroke="none"/><rect x="-23.4" y="-11" width="8" height="22" rx="1.6" fill="#f3f4f6" stroke="#c4c8ce" stroke-width="1.4"/><rect x="-21.3" y="-8" width="3.8" height="16" rx="1.2" fill="#e2e6ee" stroke="#c4c8ce" stroke-width="1.1"/><rect x="-4.4" y="-12" width="8.4" height="24" fill="#eceef1" stroke="#c4c8ce" stroke-width="1.4"/><rect x="-4.4" y="-12" width="2.6" height="24" fill="#cfd3d8" stroke="none"/><rect x="4" y="-5" width="9.5" height="10" fill="#f3f4f6" stroke="#c4c8ce" stroke-width="1.4"/></g><path d="M1837.8 124 L1855 124 M1869.3 145.5 L1869.3 166.8 L1837.8 166.8 L1837.8 124" fill="none" stroke="#c8ced7" stroke-width="1.5" stroke-linejoin="round"/></svg>
<svg class="a" style="left:0px;top:0px;" width="1" height="1" viewBox="0 0 1 1"><path d="M1889.40 144.10 L1892.90 148.52 L1896.40 144.10" fill="none" stroke="#b8b8b8" stroke-width="1.8" stroke-linecap="round" stroke-linejoin="round"/></svg>
<div class="a t " style="left:1828.3px;top:176.8px;width:70.70879220075835px;height:24px;line-height:24px;font-size:16px;text-align:left;color:#8a8a8a;font-weight:400;transform:scaleX(1.1078);transform-origin:0 50%;-webkit-text-stroke:0.15px #8a8a8a;">Poufność</div>
<div class="a" style="left:1923.35px;top:123.5px;width:1.5px;height:98.0px;background:#d2d2d2;"></div>
<svg class="a" style="left:0px;top:0px;" width="1" height="1" viewBox="0 0 1 1"><rect x="1951.8" y="123.3" width="44" height="44" fill="#f7f7f7" stroke="#a4524b" stroke-width="1.5"/><g fill="#f7f7f7" stroke="#a4524b" stroke-width="1.3"><rect x="1955.6" y="127.2" width="16" height="16"/><rect x="1976" y="127.2" width="16" height="16"/><rect x="1955.6" y="147.6" width="16" height="16"/><rect x="1976" y="147.6" width="16" height="16"/></g></svg>
<div class="a t " style="left:1944.2px;top:176.8px;width:58.24889609804456px;height:24px;line-height:24px;font-size:16px;text-align:left;color:#111;font-weight:400;transform:scaleX(1.1097);transform-origin:0 50%;-webkit-text-stroke:0.2px #111;">Dodatki</div>
<div class="a" style="left:2025.55px;top:123.5px;width:1.5px;height:98.0px;background:#d2d2d2;"></div>
<svg class="a" style="left:0px;top:0px;" width="1" height="1" viewBox="0 0 1 1"><path d="M2104.6 121.8 L2128.5 145.7 L2104.6 169.6 L2080.7 145.7 Z" fill="#5b7db8"/><g fill="none" stroke="#fff" stroke-width="1.9" stroke-linejoin="round" stroke-linecap="round"><path d="M2094.5 139.5 L2114.7 139.5"/><path d="M2100.5 139.3 L2100.5 136 L2108.7 136 L2108.7 139.3"/><path d="M2096.8 139.7 L2096.8 154.5 Q2096.8 156.5 2098.8 156.5 L2110.4 156.5 Q2112.4 156.5 2112.4 154.5 L2112.4 139.7"/><path d="M2102 144.5 L2102 151.5 M2107.2 144.5 L2107.2 151.5"/></g></svg>
<div class="a t " style="left:2046.4px;top:176.8px;width:115.14277571957822px;height:24px;line-height:24px;font-size:16px;text-align:left;color:#111;font-weight:400;transform:scaleX(1.0527);transform-origin:0 50%;-webkit-text-stroke:0.2px #111;">CARBOOwaste</div>
<div class="a t " style="left:2087.4px;top:195.8px;width:38.67062902426944px;height:24px;line-height:24px;font-size:16px;text-align:left;color:#111;font-weight:400;transform:scaleX(1.0095);transform-origin:0 50%;-webkit-text-stroke:0.2px #111;">BDO</div>
<div class="a" style="left:0px;top:226.5px;width:2304px;height:2px;background:#c6c6c6;"></div>
<div class="a" style="left:0px;top:228.5px;width:2304px;height:42px;background:#fafafa;"></div>
<div class="a" style="left:0px;top:229px;width:136px;height:41px;background:#fbfbfb;border-right:1.5px solid #c8c8c8;"></div>
<div class="a t " style="left:16px;top:236px;width:60px;height:26px;line-height:26px;font-size:20px;text-align:left;color:#111;font-weight:400;transform:scaleX(0.8993);transform-origin:0 50%;">A1</div>
<svg class="a" style="left:0px;top:0px;" width="1" height="1" viewBox="0 0 1 1"><path d="M123.3 243.3 L128 236.3 L132.7 243.3 Z M123.3 254.2 L128 261.4 L132.7 254.2 Z" fill="#555"/></svg>
<svg class="a" style="left:0px;top:0px;" width="1" height="1" viewBox="0 0 1 1"><path d="M161.5 245 L176.3 259.2 M176.3 245 L161.5 259.2" stroke="#b9b9b9" stroke-width="3" stroke-linecap="butt"/><path d="M206.5 252.5 L213.5 258.7 L226 245" fill="none" stroke="#b9b9b9" stroke-width="3"/></svg>
<div class="a t " style="left:243px;top:234.6px;width:30px;height:30px;line-height:30px;font-size:25.5px;text-align:left;color:#333;font-weight:400;transform:scaleX(1.12);transform-origin:0 50%;font-family:'Liberation Serif',serif;font-style:italic;line-height:30px;-webkit-text-stroke:.35px #333;">fx</div>
<svg class="a" style="left:0px;top:0px;" width="1" height="1" viewBox="0 0 1 1"><path d="M275.80 249.80 L279.50 254.14 L283.20 249.80" fill="none" stroke="#bdbdbd" stroke-width="1.6" stroke-linecap="round" stroke-linejoin="round"/></svg>
<div class="a" style="left:289.5px;top:234.5px;width:2020px;height:33.5px;background:#fdfdfd;border:1px solid #dcdcdc;border-radius:5px 0 0 5px;"></div>
<div class="a t " style="left:301.5px;top:237px;width:200px;height:26px;line-height:26px;font-size:20px;text-align:left;color:#111;font-weight:400;transform:scaleX(0.8737);transform-origin:0 50%;">RAPORT</div>
<div class="a" style="left:2271px;top:235px;width:34px;height:33px;background:#fbfbfb;border:1px solid #d0d0d0;border-radius:5px 0 0 5px;"></div>
<svg class="a" style="left:0px;top:0px;" width="1" height="1" viewBox="0 0 1 1"><path d="M2279.5 246 L2289.5 246 L2284.5 254.5 Z" fill="#444"/></svg>
<div class="a" style="left:0px;top:270.5px;width:2304px;height:2px;background:#bfbfbf;"></div>
<div class="a" style="left:0px;top:272.5px;width:2304px;height:2px;background:#e6e6e6;"></div>
<div class="a" style="left:0px;top:274px;width:2304px;height:1.2px;background:#b5b5b5;"></div>
<div class="a" style="left:0px;top:275px;width:2304px;height:1087px;background:#ffffff;"></div>
<div class="a" style="left:0px;top:275px;width:2304px;height:33px;background:#f5f5f5;"></div>
<div class="a" style="left:36px;top:275px;width:407.5px;height:33px;background:#ececec;"></div>
<div class="a" style="left:36px;top:307px;width:408px;height:3px;background:#1e6b3c;"></div>
<div class="a" style="left:443.5px;top:308.2px;width:1861px;height:1.5px;background:#c4c4c4;"></div>
<div class="a t " style="left:36px;top:277.6px;width:160px;height:31px;line-height:31px;font-size:17px;text-align:center;color:#1e6b3c;font-weight:400;transform:scaleX(0.93);transform-origin:50% 50%;">A</div>
<div class="a t " style="left:196px;top:277.6px;width:247.5px;height:31px;line-height:31px;font-size:17px;text-align:center;color:#1e6b3c;font-weight:400;transform:scaleX(0.93);transform-origin:50% 50%;">B</div>
<div class="a" style="left:195.5px;top:290px;width:1px;height:18px;background:#dcdcdc;"></div>
<div class="a t " style="left:443.5px;top:277.6px;width:576.5px;height:31px;line-height:31px;font-size:17px;text-align:center;color:#444;font-weight:400;transform:scaleX(0.93);transform-origin:50% 50%;">C</div>
<div class="a" style="left:443.0px;top:290px;width:1px;height:18px;background:#dcdcdc;"></div>
<div class="a t " style="left:1020px;top:277.6px;width:160px;height:31px;line-height:31px;font-size:17px;text-align:center;color:#444;font-weight:400;transform:scaleX(0.93);transform-origin:50% 50%;">D</div>
<div class="a" style="left:1019.5px;top:277px;width:1px;height:31px;"></div>
<div class="a t " style="left:1180px;top:277.6px;width:160px;height:31px;line-height:31px;font-size:17px;text-align:center;color:#444;font-weight:400;transform:scaleX(0.93);transform-origin:50% 50%;">E</div>
<div class="a" style="left:1179.5px;top:277px;width:1px;height:31px;background:#dcdcdc;"></div>
<div class="a t " style="left:1340px;top:277.6px;width:160px;height:31px;line-height:31px;font-size:17px;text-align:center;color:#444;font-weight:400;transform:scaleX(0.93);transform-origin:50% 50%;">F</div>
<div class="a" style="left:1339.5px;top:277px;width:1px;height:31px;background:#dcdcdc;"></div>
<div class="a t " style="left:1500px;top:277.6px;width:160px;height:31px;line-height:31px;font-size:17px;text-align:center;color:#444;font-weight:400;transform:scaleX(0.93);transform-origin:50% 50%;">G</div>
<div class="a" style="left:1499.5px;top:277px;width:1px;height:31px;background:#dcdcdc;"></div>
<div class="a t " style="left:1660px;top:277.6px;width:160px;height:31px;line-height:31px;font-size:17px;text-align:center;color:#444;font-weight:400;transform:scaleX(0.93);transform-origin:50% 50%;">H</div>
<div class="a" style="left:1659.5px;top:277px;width:1px;height:31px;background:#dcdcdc;"></div>
<div class="a t " style="left:1820px;top:277.6px;width:160px;height:31px;line-height:31px;font-size:17px;text-align:center;color:#444;font-weight:400;transform:scaleX(0.93);transform-origin:50% 50%;">I</div>
<div class="a" style="left:1819.5px;top:277px;width:1px;height:31px;background:#dcdcdc;"></div>
<div class="a t " style="left:1980px;top:277.6px;width:160px;height:31px;line-height:31px;font-size:17px;text-align:center;color:#444;font-weight:400;transform:scaleX(0.93);transform-origin:50% 50%;">J</div>
<div class="a" style="left:1979.5px;top:277px;width:1px;height:31px;background:#dcdcdc;"></div>
<div class="a t " style="left:2140px;top:277.6px;width:160px;height:31px;line-height:31px;font-size:17px;text-align:center;color:#444;font-weight:400;transform:scaleX(0.93);transform-origin:50% 50%;">K</div>
<div class="a" style="left:2139.5px;top:277px;width:1px;height:31px;background:#dcdcdc;"></div>
<div class="a" style="left:2299.5px;top:277px;width:1px;height:31px;background:#dcdcdc;"></div>
<svg class="a" style="left:0px;top:275px;" width="36" height="33" viewBox="0 0 36 33"><path d="M32 7.5 L32 30.5 L8 30.5 Z" fill="#d4d4d4"/></svg>
<div class="a" style="left:0px;top:308px;width:36px;height:1054px;background:#f6f6f6;"></div>
<div class="a" style="left:0px;top:310px;width:36px;height:32px;background:#ececec;"></div>
<div class="a" style="left:35.2px;top:502px;width:1.5px;height:860px;background:#bdbdbd;"></div>
<div class="a t " style="left:0px;top:318.5px;width:36px;height:22px;line-height:22px;font-size:16.5px;text-align:center;color:#1e6b3c;font-weight:400;transform:scaleX(0.95);transform-origin:50% 50%;">1</div>
<div class="a t " style="left:0px;top:350.5px;width:36px;height:22px;line-height:22px;font-size:16.5px;text-align:center;color:#444;font-weight:400;transform:scaleX(0.95);transform-origin:50% 50%;">2</div>
<div class="a" style="left:0px;top:341.5px;width:36px;height:1px;background:#e7e7e7;"></div>
<div class="a t " style="left:0px;top:382.5px;width:36px;height:22px;line-height:22px;font-size:16.5px;text-align:center;color:#444;font-weight:400;transform:scaleX(0.95);transform-origin:50% 50%;">3</div>
<div class="a" style="left:0px;top:373.5px;width:36px;height:1px;background:#e7e7e7;"></div>
<div class="a t " style="left:0px;top:414.5px;width:36px;height:22px;line-height:22px;font-size:16.5px;text-align:center;color:#444;font-weight:400;transform:scaleX(0.95);transform-origin:50% 50%;">4</div>
<div class="a" style="left:0px;top:405.5px;width:36px;height:1px;background:#e7e7e7;"></div>
<div class="a t " style="left:0px;top:446.5px;width:36px;height:22px;line-height:22px;font-size:16.5px;text-align:center;color:#444;font-weight:400;transform:scaleX(0.95);transform-origin:50% 50%;">5</div>
<div class="a" style="left:0px;top:437.5px;width:36px;height:1px;background:#e7e7e7;"></div>
<div class="a t " style="left:0px;top:478.5px;width:36px;height:22px;line-height:22px;font-size:16.5px;text-align:center;color:#444;font-weight:400;transform:scaleX(0.95);transform-origin:50% 50%;">6</div>
<div class="a" style="left:0px;top:469.5px;width:36px;height:1px;background:#e7e7e7;"></div>
<div class="a" style="left:0;top:502px;width:36px;height:15px;overflow:hidden;"><div class="a t" style="left:0;top:-7.5px;width:36px;height:22px;line-height:22px;font-size:16.5px;text-align:center;color:#444;transform:scaleX(.95);">7</div></div>
<div class="a" style="left:0px;top:501.5px;width:36px;height:1px;background:#e7e7e7;"></div>
<div class="a t " style="left:0px;top:525.5px;width:36px;height:22px;line-height:22px;font-size:16.5px;text-align:center;color:#444;font-weight:400;transform:scaleX(0.95);transform-origin:50% 50%;">8</div>
<div class="a" style="left:0px;top:516.5px;width:36px;height:1px;background:#e7e7e7;"></div>
<div class="a t " style="left:0px;top:605.5px;width:36px;height:22px;line-height:22px;font-size:16.5px;text-align:center;color:#444;font-weight:400;transform:scaleX(0.95);transform-origin:50% 50%;">9</div>
<div class="a" style="left:0px;top:548.5px;width:36px;height:1px;background:#e7e7e7;"></div>
<div class="a t " style="left:0px;top:653.5px;width:36px;height:22px;line-height:22px;font-size:16.5px;text-align:center;color:#444;font-weight:400;">10</div>
<div class="a" style="left:0px;top:628.5px;width:36px;height:1px;background:#e7e7e7;"></div>
<div class="a t " style="left:0px;top:701.5px;width:36px;height:22px;line-height:22px;font-size:16.5px;text-align:center;color:#444;font-weight:400;">11</div>
<div class="a" style="left:0px;top:676.5px;width:36px;height:1px;background:#e7e7e7;"></div>
<div class="a t " style="left:0px;top:749.5px;width:36px;height:22px;line-height:22px;font-size:16.5px;text-align:center;color:#444;font-weight:400;">12</div>
<div class="a" style="left:0px;top:724.5px;width:36px;height:1px;background:#e7e7e7;"></div>
<div class="a t " style="left:0px;top:797.5px;width:36px;height:22px;line-height:22px;font-size:16.5px;text-align:center;color:#444;font-weight:400;">13</div>
<div class="a" style="left:0px;top:772.5px;width:36px;height:1px;background:#e7e7e7;"></div>
<div class="a t " style="left:0px;top:845.5px;width:36px;height:22px;line-height:22px;font-size:16.5px;text-align:center;color:#444;font-weight:400;">14</div>
<div class="a" style="left:0px;top:820.5px;width:36px;height:1px;background:#e7e7e7;"></div>
<div class="a t " style="left:0px;top:893.5px;width:36px;height:22px;line-height:22px;font-size:16.5px;text-align:center;color:#444;font-weight:400;">15</div>
<div class="a" style="left:0px;top:868.5px;width:36px;height:1px;background:#e7e7e7;"></div>
<div class="a t " style="left:0px;top:941.5px;width:36px;height:22px;line-height:22px;font-size:16.5px;text-align:center;color:#444;font-weight:400;">16</div>
<div class="a" style="left:0px;top:916.5px;width:36px;height:1px;background:#e7e7e7;"></div>
<div class="a t " style="left:0px;top:990.0px;width:36px;height:22px;line-height:22px;font-size:16.5px;text-align:center;color:#444;font-weight:400;">17</div>
<div class="a" style="left:0px;top:964.5px;width:36px;height:1px;background:#e7e7e7;"></div>
<div class="a t " style="left:0px;top:1015.5px;width:36px;height:22px;line-height:22px;font-size:16.5px;text-align:center;color:#444;font-weight:400;">18</div>
<div class="a" style="left:0px;top:1013.0px;width:36px;height:1px;background:#e7e7e7;"></div>
<div class="a t " style="left:0px;top:1040.5px;width:36px;height:22px;line-height:22px;font-size:16.5px;text-align:center;color:#444;font-weight:400;">19</div>
<div class="a" style="left:0px;top:1038.5px;width:36px;height:1px;background:#e7e7e7;"></div>
<div class="a t " style="left:0px;top:1065.8px;width:36px;height:22px;line-height:22px;font-size:16.5px;text-align:center;color:#444;font-weight:400;">20</div>
<div class="a" style="left:0px;top:1063.5px;width:36px;height:1px;background:#e7e7e7;"></div>
<div class="a t " style="left:0px;top:1090.9px;width:36px;height:22px;line-height:22px;font-size:16.5px;text-align:center;color:#444;font-weight:400;">21</div>
<div class="a" style="left:0px;top:1088.8px;width:36px;height:1px;background:#e7e7e7;"></div>
<div class="a t " style="left:0px;top:1116.5px;width:36px;height:22px;line-height:22px;font-size:16.5px;text-align:center;color:#444;font-weight:400;">22</div>
<div class="a" style="left:0px;top:1113.9px;width:36px;height:1px;background:#e7e7e7;"></div>
<div class="a t " style="left:0px;top:1142.1px;width:36px;height:22px;line-height:22px;font-size:16.5px;text-align:center;color:#444;font-weight:400;">23</div>
<div class="a" style="left:0px;top:1139.5px;width:36px;height:1px;background:#e7e7e7;"></div>
<div class="a t " style="left:0px;top:1167.7px;width:36px;height:22px;line-height:22px;font-size:16.5px;text-align:center;color:#444;font-weight:400;">24</div>
<div class="a" style="left:0px;top:1165.1px;width:36px;height:1px;background:#e7e7e7;"></div>
<div class="a t " style="left:0px;top:1193.3px;width:36px;height:22px;line-height:22px;font-size:16.5px;text-align:center;color:#444;font-weight:400;">25</div>
<div class="a" style="left:0px;top:1190.7px;width:36px;height:1px;background:#e7e7e7;"></div>
<div class="a t " style="left:0px;top:1218.9px;width:36px;height:22px;line-height:22px;font-size:16.5px;text-align:center;color:#444;font-weight:400;">26</div>
<div class="a" style="left:0px;top:1216.3px;width:36px;height:1px;background:#e7e7e7;"></div>
<div class="a t " style="left:0px;top:1244.5px;width:36px;height:22px;line-height:22px;font-size:16.5px;text-align:center;color:#444;font-weight:400;">27</div>
<div class="a" style="left:0px;top:1241.9px;width:36px;height:1px;background:#e7e7e7;"></div>
<div class="a t " style="left:0px;top:1270.1px;width:36px;height:22px;line-height:22px;font-size:16.5px;text-align:center;color:#444;font-weight:400;">28</div>
<div class="a" style="left:0px;top:1267.5px;width:36px;height:1px;background:#e7e7e7;"></div>
<div class="a t " style="left:0px;top:1295.7px;width:36px;height:22px;line-height:22px;font-size:16.5px;text-align:center;color:#444;font-weight:400;">29</div>
<div class="a" style="left:0px;top:1293.1px;width:36px;height:1px;background:#e7e7e7;"></div>
<div class="a t " style="left:0px;top:1321.3px;width:36px;height:22px;line-height:22px;font-size:16.5px;text-align:center;color:#444;font-weight:400;">30</div>
<div class="a" style="left:0px;top:1318.7px;width:36px;height:1px;background:#e7e7e7;"></div>
<div class="a" style="left:0px;top:1344.3px;width:36px;height:1px;background:#e7e7e7;"></div>
<div class="a" style="left:36px;top:310px;width:984px;height:192px;background:#f2f2f2;"></div>
<div class="a" style="left:1020px;top:310px;width:1284px;height:207px;background:#e8e8e8;"></div>
<div class="a" style="left:36px;top:502px;width:984px;height:15px;background:#e9e9e9;"></div>
<div class="a" style="left:36px;top:310px;width:407.5px;height:32px;background:#5c7dae;"></div>
<div class="a t " style="left:40.6px;top:308px;width:400px;height:32px;line-height:32px;font-size:14px;text-align:left;color:#fff;font-weight:700;transform:scaleX(0.9135);transform-origin:0 50%;">RAPORT</div>
<div class="a t " style="left:448px;top:310px;width:560px;height:32px;line-height:32px;font-size:14.5px;text-align:left;color:#5f79a6;font-weight:700;transform:scaleX(0.9112);transform-origin:0 50%;">ZESTAWIENIE MIESIĘCZNE</div>
<div class="a" style="left:36px;top:342px;width:407.5px;height:32px;background:#5c7dae;"></div>
<div class="a" style="left:36px;top:341px;width:407.5px;height:1.5px;background:#dbe6f5;"></div>
<div class="a" style="left:443.5px;top:341.5px;width:576.5px;height:1px;background:#e3e3e3;"></div>
<div class="a t " style="left:40.6px;top:340px;width:400px;height:32px;line-height:32px;font-size:14px;text-align:left;color:#fff;font-weight:700;transform:scaleX(0.9566);transform-origin:0 50%;">OPIS</div>
<div class="a t d" style="left:448px;top:342px;width:560px;height:32px;line-height:32px;font-size:14.5px;text-align:left;color:#000;font-weight:400;transform:scaleX(0.981);transform-origin:0 50%;">Zestawienie odpadów wytworzonych w poszczególnych miesiącach roku</div>
<div class="a" style="left:36px;top:374px;width:407.5px;height:32px;background:#5c7dae;"></div>
<div class="a" style="left:36px;top:373px;width:407.5px;height:1.5px;background:#dbe6f5;"></div>
<div class="a" style="left:443.5px;top:373.5px;width:576.5px;height:1px;background:#e3e3e3;"></div>
<div class="a t " style="left:40.6px;top:372px;width:400px;height:32px;line-height:32px;font-size:14px;text-align:left;color:#fff;font-weight:700;transform:scaleX(0.9391);transform-origin:0 50%;">MIEJSCE PROWADZENIA DZIAŁALNOŚCI</div>
<div class="a t d" style="left:448px;top:374px;width:560px;height:32px;line-height:32px;font-size:14.5px;text-align:left;color:#000;font-weight:400;transform:scaleX(0.9452);transform-origin:0 50%;">Siedziba 1</div>
<div class="a" style="left:36px;top:406px;width:407.5px;height:32px;background:#5c7dae;"></div>
<div class="a" style="left:36px;top:405px;width:407.5px;height:1.5px;background:#dbe6f5;"></div>
<div class="a" style="left:443.5px;top:405.5px;width:576.5px;height:1px;background:#e3e3e3;"></div>
<div class="a t " style="left:40.6px;top:404px;width:400px;height:32px;line-height:32px;font-size:14px;text-align:left;color:#fff;font-weight:700;transform:scaleX(0.9209);transform-origin:0 50%;">NUMER MPD</div>
<div class="a t d" style="left:448px;top:406px;width:560px;height:32px;line-height:32px;font-size:14.5px;text-align:left;color:#000;font-weight:400;transform:scaleX(0.9967);transform-origin:0 50%;">0001/000000000</div>
<div class="a" style="left:36px;top:438px;width:407.5px;height:32px;background:#5c7dae;"></div>
<div class="a" style="left:36px;top:437px;width:407.5px;height:1.5px;background:#dbe6f5;"></div>
<div class="a" style="left:443.5px;top:437.5px;width:576.5px;height:1px;background:#e3e3e3;"></div>
<div class="a t " style="left:40.6px;top:436px;width:400px;height:32px;line-height:32px;font-size:14px;text-align:left;color:#fff;font-weight:700;transform:scaleX(0.9385);transform-origin:0 50%;">RAPORT ZA ROK</div>
<div class="a t d" style="left:448px;top:438px;width:560px;height:32px;line-height:32px;font-size:14.5px;text-align:left;color:#000;font-weight:400;transform:scaleX(0.9921);transform-origin:0 50%;">2024</div>
<div class="a" style="left:36px;top:470px;width:407.5px;height:32px;background:#5c7dae;"></div>
<div class="a" style="left:36px;top:469px;width:407.5px;height:1.5px;background:#dbe6f5;"></div>
<div class="a" style="left:443.5px;top:469.5px;width:576.5px;height:1px;background:#e3e3e3;"></div>
<div class="a t " style="left:40.6px;top:468px;width:400px;height:32px;line-height:32px;font-size:14px;text-align:left;color:#fff;font-weight:700;transform:scaleX(0.9614);transform-origin:0 50%;">DATA IMPORTU DANYCH</div>
<div class="a t d" style="left:448px;top:470px;width:560px;height:32px;line-height:32px;font-size:14.5px;text-align:left;color:#000;font-weight:400;transform:scaleX(1.0141);transform-origin:0 50%;">27.08.2025, 13:21:32</div>
<div class="a" style="left:36px;top:501px;width:407.5px;height:1.5px;background:#dbe6f5;"></div>
<div class="a" style="left:443px;top:310px;width:1px;height:192px;background:#e3e3e3;"></div>
<div class="a" style="left:36px;top:517px;width:984px;height:112px;background:#363636;"></div>
<div class="a" style="left:195px;top:517px;width:2px;height:112px;background:#e8e8e8;"></div>
<div class="a" style="left:442.5px;top:517px;width:2px;height:112px;background:#e8e8e8;"></div>
<div class="a t " style="left:36px;top:517px;width:160px;height:112px;line-height:112px;font-size:18px;text-align:center;color:#fff;font-weight:700;transform:scaleX(0.8668);transform-origin:50% 50%;">Kod odpadu</div>
<div class="a t " style="left:196px;top:517px;width:247.5px;height:112px;line-height:112px;font-size:18px;text-align:center;color:#fff;font-weight:700;transform:scaleX(0.8993);transform-origin:50% 50%;">Odpad niebezpieczny</div>
<div class="a t " style="left:443.5px;top:517px;width:576.5px;height:112px;line-height:112px;font-size:18px;text-align:center;color:#fff;font-weight:700;transform:scaleX(0.8838);transform-origin:50% 50%;">Rodzaj odpadu</div>
<div class="a" style="left:1020px;top:517px;width:1284px;height:32px;background:#363636;"></div>
<div class="a" style="left:1020px;top:549px;width:1284px;height:80px;background:#4e4e4e;"></div>
<div class="a" style="left:1020px;top:548.8px;width:1284px;height:1.5px;background:#dedede;"></div>
<div class="a t " style="left:1020px;top:517px;width:480px;height:32px;line-height:32px;font-size:18px;text-align:center;color:#fff;font-weight:700;transform:scaleX(0.8967);transform-origin:50% 50%;">Styczeń</div>
<div class="a t " style="left:1500px;top:517px;width:480px;height:32px;line-height:32px;font-size:18px;text-align:center;color:#fff;font-weight:700;transform:scaleX(0.8948);transform-origin:50% 50%;">Luty</div>
<div class="a t " style="left:1980px;top:517px;width:480px;height:32px;line-height:32px;font-size:18px;text-align:center;color:#fff;font-weight:700;transform:scaleX(0.9339);transform-origin:50% 50%;">Marzec</div>
<div class="a t " style="left:1020px;top:556.1px;width:160px;height:22.6px;line-height:22.6px;font-size:14.5px;text-align:center;color:#fff;font-weight:700;transform:scaleX(0.9294);transform-origin:50% 50%;">Wytworzone w związku</div>
<div class="a t " style="left:1020px;top:578.7px;width:160px;height:22.6px;line-height:22.6px;font-size:14.5px;text-align:center;color:#fff;font-weight:700;transform:scaleX(0.9662);transform-origin:50% 50%;">z eksploatacją</div>
<div class="a t " style="left:1020px;top:601.3000000000001px;width:160px;height:22.6px;line-height:22.6px;font-size:14.5px;text-align:center;color:#fff;font-weight:700;transform:scaleX(0.9827);transform-origin:50% 50%;">instalacji [Mg]</div>
<div class="a t " style="left:1180px;top:567.4px;width:160px;height:22.6px;line-height:22.6px;font-size:14.5px;text-align:center;color:#fff;font-weight:700;transform:scaleX(0.9085);transform-origin:50% 50%;">Wytworzone poza</div>
<div class="a t " style="left:1180px;top:590.0px;width:160px;height:22.6px;line-height:22.6px;font-size:14.5px;text-align:center;color:#fff;font-weight:700;transform:scaleX(0.9731);transform-origin:50% 50%;">instalacją [Mg]</div>
<div class="a" style="left:1179px;top:549px;width:2px;height:80px;background:#d9d9d9;"></div>
<div class="a t " style="left:1340px;top:556.1px;width:160px;height:22.6px;line-height:22.6px;font-size:14.5px;text-align:center;color:#fff;font-weight:700;transform:scaleX(0.9638);transform-origin:50% 50%;">Łączna masa</div>
<div class="a t " style="left:1340px;top:578.7px;width:160px;height:22.6px;line-height:22.6px;font-size:14.5px;text-align:center;color:#fff;font-weight:700;transform:scaleX(0.9209);transform-origin:50% 50%;">wytworzonych</div>
<div class="a t " style="left:1340px;top:601.3000000000001px;width:160px;height:22.6px;line-height:22.6px;font-size:14.5px;text-align:center;color:#fff;font-weight:700;transform:scaleX(0.9262);transform-origin:50% 50%;">odpadów [Mg]</div>
<div class="a" style="left:1339px;top:549px;width:2px;height:80px;background:#d9d9d9;"></div>
<div class="a t " style="left:1500px;top:556.1px;width:160px;height:22.6px;line-height:22.6px;font-size:14.5px;text-align:center;color:#fff;font-weight:700;transform:scaleX(0.9294);transform-origin:50% 50%;">Wytworzone w związku</div>
<div class="a t " style="left:1500px;top:578.7px;width:160px;height:22.6px;line-height:22.6px;font-size:14.5px;text-align:center;color:#fff;font-weight:700;transform:scaleX(0.9662);transform-origin:50% 50%;">z eksploatacją</div>
<div class="a t " style="left:1500px;top:601.3000000000001px;width:160px;height:22.6px;line-height:22.6px;font-size:14.5px;text-align:center;color:#fff;font-weight:700;transform:scaleX(0.9827);transform-origin:50% 50%;">instalacji [Mg]</div>
<div class="a" style="left:1499px;top:517px;width:2px;height:112px;background:#d9d9d9;"></div>
<div class="a t " style="left:1660px;top:567.4px;width:160px;height:22.6px;line-height:22.6px;font-size:14.5px;text-align:center;color:#fff;font-weight:700;transform:scaleX(0.9085);transform-origin:50% 50%;">Wytworzone poza</div>
<div class="a t " style="left:1660px;top:590.0px;width:160px;height:22.6px;line-height:22.6px;font-size:14.5px;text-align:center;color:#fff;font-weight:700;transform:scaleX(0.9731);transform-origin:50% 50%;">instalacją [Mg]</div>
<div class="a" style="left:1659px;top:549px;width:2px;height:80px;background:#d9d9d9;"></div>
<div class="a t " style="left:1820px;top:556.1px;width:160px;height:22.6px;line-height:22.6px;font-size:14.5px;text-align:center;color:#fff;font-weight:700;transform:scaleX(0.9638);transform-origin:50% 50%;">Łączna masa</div>
<div class="a t " style="left:1820px;top:578.7px;width:160px;height:22.6px;line-height:22.6px;font-size:14.5px;text-align:center;color:#fff;font-weight:700;transform:scaleX(0.9209);transform-origin:50% 50%;">wytworzonych</div>
<div class="a t " style="left:1820px;top:601.3000000000001px;width:160px;height:22.6px;line-height:22.6px;font-size:14.5px;text-align:center;color:#fff;font-weight:700;transform:scaleX(0.9262);transform-origin:50% 50%;">odpadów [Mg]</div>
<div class="a" style="left:1819px;top:549px;width:2px;height:80px;background:#d9d9d9;"></div>
<div class="a t " style="left:1980px;top:556.1px;width:160px;height:22.6px;line-height:22.6px;font-size:14.5px;text-align:center;color:#fff;font-weight:700;transform:scaleX(0.9294);transform-origin:50% 50%;">Wytworzone w związku</div>
<div class="a t " style="left:1980px;top:578.7px;width:160px;height:22.6px;line-height:22.6px;font-size:14.5px;text-align:center;color:#fff;font-weight:700;transform:scaleX(0.9662);transform-origin:50% 50%;">z eksploatacją</div>
<div class="a t " style="left:1980px;top:601.3000000000001px;width:160px;height:22.6px;line-height:22.6px;font-size:14.5px;text-align:center;color:#fff;font-weight:700;transform:scaleX(0.9827);transform-origin:50% 50%;">instalacji [Mg]</div>
<div class="a" style="left:1979px;top:517px;width:2px;height:112px;background:#d9d9d9;"></div>
<div class="a t " style="left:2140px;top:567.4px;width:160px;height:22.6px;line-height:22.6px;font-size:14.5px;text-align:center;color:#fff;font-weight:700;transform:scaleX(0.9085);transform-origin:50% 50%;">Wytworzone poza</div>
<div class="a t " style="left:2140px;top:590.0px;width:160px;height:22.6px;line-height:22.6px;font-size:14.5px;text-align:center;color:#fff;font-weight:700;transform:scaleX(0.9731);transform-origin:50% 50%;">instalacją [Mg]</div>
<div class="a" style="left:2139px;top:549px;width:2px;height:80px;background:#d9d9d9;"></div>
<div class="a" style="left:2299px;top:549px;width:2px;height:80px;background:#d9d9d9;"></div>
<div class="a" style="left:36px;top:629px;width:2268px;height:384.5px;background:#f2f2f2;"></div>
<div class="a t d" style="left:36.5px;top:630.5px;width:160px;height:48px;line-height:48px;font-size:17.5px;text-align:center;color:#000;font-weight:400;transform:scaleX(0.9248);transform-origin:50% 50%;">07 02 13</div>
<div class="a t d" style="left:196.5px;top:630.5px;width:247.5px;height:48px;line-height:48px;font-size:17.5px;text-align:center;color:#000;font-weight:400;transform:scaleX(1.0092);transform-origin:50% 50%;">Nie</div>
<div class="a t d" style="left:448px;top:630.5px;width:570px;height:48px;line-height:48px;font-size:17.5px;text-align:left;color:#000;font-weight:400;transform:scaleX(0.9738);transform-origin:0 50%;">Odpady tworzyw sztucznych</div>
<div class="a t d" style="left:1020px;top:630.5px;width:160px;height:48px;line-height:48px;font-size:17.5px;text-align:center;color:#000;font-weight:400;transform:scaleX(0.962);transform-origin:50% 50%;">0,7100</div>
<div class="a t d" style="left:1180px;top:630.5px;width:160px;height:48px;line-height:48px;font-size:17.5px;text-align:center;color:#000;font-weight:400;transform:scaleX(0.962);transform-origin:50% 50%;">0,0000</div>
<div class="a t d" style="left:1340px;top:630.5px;width:160px;height:48px;line-height:48px;font-size:17.5px;text-align:center;color:#000;font-weight:400;transform:scaleX(0.962);transform-origin:50% 50%;">0,7100</div>
<div class="a t d" style="left:1500px;top:630.5px;width:160px;height:48px;line-height:48px;font-size:17.5px;text-align:center;color:#000;font-weight:400;transform:scaleX(0.962);transform-origin:50% 50%;">0,9510</div>
<div class="a t d" style="left:1660px;top:630.5px;width:160px;height:48px;line-height:48px;font-size:17.5px;text-align:center;color:#000;font-weight:400;transform:scaleX(0.962);transform-origin:50% 50%;">0,0000</div>
<div class="a t d" style="left:1820px;top:630.5px;width:160px;height:48px;line-height:48px;font-size:17.5px;text-align:center;color:#000;font-weight:400;transform:scaleX(0.962);transform-origin:50% 50%;">0,9510</div>
<div class="a t d" style="left:1980px;top:630.5px;width:160px;height:48px;line-height:48px;font-size:17.5px;text-align:center;color:#000;font-weight:400;transform:scaleX(0.962);transform-origin:50% 50%;">0,3500</div>
<div class="a t d" style="left:2140px;top:630.5px;width:160px;height:48px;line-height:48px;font-size:17.5px;text-align:center;color:#000;font-weight:400;transform:scaleX(0.962);transform-origin:50% 50%;">0,0000</div>
<svg class="a" style="left:37px;top:630px;" width="10" height="11" viewBox="0 0 10 11"><path d="M0 0 L10 0 L0 10 Z" fill="#1b7a3a"/></svg>
<div class="a" style="left:36px;top:676.5px;width:2268px;height:1px;background:#e3e3e3;"></div>
<div class="a t d" style="left:36.5px;top:678.5px;width:160px;height:48px;line-height:48px;font-size:17.5px;text-align:center;color:#000;font-weight:400;transform:scaleX(0.971);transform-origin:50% 50%;">08 01 11*</div>
<div class="a t d" style="left:196.5px;top:678.5px;width:247.5px;height:48px;line-height:48px;font-size:17.5px;text-align:center;color:#000;font-weight:400;transform:scaleX(0.9731);transform-origin:50% 50%;">Tak</div>
<div class="a t d" style="left:448px;top:666.0px;width:570px;height:48px;line-height:48px;font-size:17.5px;text-align:left;color:#000;font-weight:400;transform:scaleX(0.9788);transform-origin:0 50%;">Odpady farb i lakierów zawierających rozpuszczalniki organiczne lub inne</div>
<div class="a t d" style="left:448px;top:691.0px;width:570px;height:48px;line-height:48px;font-size:17.5px;text-align:left;color:#000;font-weight:400;transform:scaleX(0.9929);transform-origin:0 50%;">substancje niebezpieczne</div>
<div class="a t d" style="left:1020px;top:678.5px;width:160px;height:48px;line-height:48px;font-size:17.5px;text-align:center;color:#000;font-weight:400;transform:scaleX(0.962);transform-origin:50% 50%;">0,2300</div>
<div class="a t d" style="left:1180px;top:678.5px;width:160px;height:48px;line-height:48px;font-size:17.5px;text-align:center;color:#000;font-weight:400;transform:scaleX(0.962);transform-origin:50% 50%;">0,0000</div>
<div class="a t d" style="left:1340px;top:678.5px;width:160px;height:48px;line-height:48px;font-size:17.5px;text-align:center;color:#000;font-weight:400;transform:scaleX(0.962);transform-origin:50% 50%;">0,2300</div>
<div class="a t d" style="left:1500px;top:678.5px;width:160px;height:48px;line-height:48px;font-size:17.5px;text-align:center;color:#000;font-weight:400;transform:scaleX(0.962);transform-origin:50% 50%;">0,0000</div>
<div class="a t d" style="left:1660px;top:678.5px;width:160px;height:48px;line-height:48px;font-size:17.5px;text-align:center;color:#000;font-weight:400;transform:scaleX(0.962);transform-origin:50% 50%;">0,0000</div>
<div class="a t d" style="left:1820px;top:678.5px;width:160px;height:48px;line-height:48px;font-size:17.5px;text-align:center;color:#000;font-weight:400;transform:scaleX(0.962);transform-origin:50% 50%;">0,0000</div>
<div class="a t d" style="left:1980px;top:678.5px;width:160px;height:48px;line-height:48px;font-size:17.5px;text-align:center;color:#000;font-weight:400;transform:scaleX(0.962);transform-origin:50% 50%;">0,0000</div>
<div class="a t d" style="left:2140px;top:678.5px;width:160px;height:48px;line-height:48px;font-size:17.5px;text-align:center;color:#000;font-weight:400;transform:scaleX(0.962);transform-origin:50% 50%;">0,0000</div>
<div class="a" style="left:36px;top:724.5px;width:2268px;height:1px;background:#e3e3e3;"></div>
<div class="a t d" style="left:36.5px;top:726.5px;width:160px;height:48px;line-height:48px;font-size:17.5px;text-align:center;color:#000;font-weight:400;transform:scaleX(0.9248);transform-origin:50% 50%;">10 10 03</div>
<div class="a t d" style="left:196.5px;top:726.5px;width:247.5px;height:48px;line-height:48px;font-size:17.5px;text-align:center;color:#000;font-weight:400;transform:scaleX(1.0092);transform-origin:50% 50%;">Nie</div>
<div class="a t d" style="left:448px;top:726.5px;width:570px;height:48px;line-height:48px;font-size:17.5px;text-align:left;color:#000;font-weight:400;transform:scaleX(0.9573);transform-origin:0 50%;">Zgary i żużle odlewnicze</div>
<div class="a t d" style="left:1020px;top:726.5px;width:160px;height:48px;line-height:48px;font-size:17.5px;text-align:center;color:#000;font-weight:400;transform:scaleX(0.962);transform-origin:50% 50%;">0,0000</div>
<div class="a t d" style="left:1180px;top:726.5px;width:160px;height:48px;line-height:48px;font-size:17.5px;text-align:center;color:#000;font-weight:400;transform:scaleX(0.962);transform-origin:50% 50%;">0,0000</div>
<div class="a t d" style="left:1340px;top:726.5px;width:160px;height:48px;line-height:48px;font-size:17.5px;text-align:center;color:#000;font-weight:400;transform:scaleX(0.962);transform-origin:50% 50%;">0,0000</div>
<div class="a t d" style="left:1500px;top:726.5px;width:160px;height:48px;line-height:48px;font-size:17.5px;text-align:center;color:#000;font-weight:400;transform:scaleX(0.962);transform-origin:50% 50%;">0,1290</div>
<div class="a t d" style="left:1660px;top:726.5px;width:160px;height:48px;line-height:48px;font-size:17.5px;text-align:center;color:#000;font-weight:400;transform:scaleX(0.962);transform-origin:50% 50%;">0,0000</div>
<div class="a t d" style="left:1820px;top:726.5px;width:160px;height:48px;line-height:48px;font-size:17.5px;text-align:center;color:#000;font-weight:400;transform:scaleX(0.962);transform-origin:50% 50%;">0,1290</div>
<div class="a t d" style="left:1980px;top:726.5px;width:160px;height:48px;line-height:48px;font-size:17.5px;text-align:center;color:#000;font-weight:400;transform:scaleX(0.962);transform-origin:50% 50%;">0,0860</div>
<div class="a t d" style="left:2140px;top:726.5px;width:160px;height:48px;line-height:48px;font-size:17.5px;text-align:center;color:#000;font-weight:400;transform:scaleX(0.962);transform-origin:50% 50%;">0,0000</div>
<svg class="a" style="left:37px;top:726px;" width="10" height="11" viewBox="0 0 10 11"><path d="M0 0 L10 0 L0 10 Z" fill="#1b7a3a"/></svg>
<div class="a" style="left:36px;top:772.5px;width:2268px;height:1px;background:#e3e3e3;"></div>
<div class="a t d" style="left:36.5px;top:774.5px;width:160px;height:48px;line-height:48px;font-size:17.5px;text-align:center;color:#000;font-weight:400;transform:scaleX(0.9248);transform-origin:50% 50%;">15 01 01</div>
<div class="a t d" style="left:196.5px;top:774.5px;width:247.5px;height:48px;line-height:48px;font-size:17.5px;text-align:center;color:#000;font-weight:400;transform:scaleX(1.0092);transform-origin:50% 50%;">Nie</div>
<div class="a t d" style="left:448px;top:774.5px;width:570px;height:48px;line-height:48px;font-size:17.5px;text-align:left;color:#000;font-weight:400;transform:scaleX(0.976);transform-origin:0 50%;">Opakowania z papieru i tektury</div>
<div class="a t d" style="left:1020px;top:774.5px;width:160px;height:48px;line-height:48px;font-size:17.5px;text-align:center;color:#000;font-weight:400;transform:scaleX(0.962);transform-origin:50% 50%;">0,0000</div>
<div class="a t d" style="left:1180px;top:774.5px;width:160px;height:48px;line-height:48px;font-size:17.5px;text-align:center;color:#000;font-weight:400;transform:scaleX(0.962);transform-origin:50% 50%;">6,1000</div>
<div class="a t d" style="left:1340px;top:774.5px;width:160px;height:48px;line-height:48px;font-size:17.5px;text-align:center;color:#000;font-weight:400;transform:scaleX(0.962);transform-origin:50% 50%;">6,1000</div>
<div class="a t d" style="left:1500px;top:774.5px;width:160px;height:48px;line-height:48px;font-size:17.5px;text-align:center;color:#000;font-weight:400;transform:scaleX(0.962);transform-origin:50% 50%;">0,0000</div>
<div class="a t d" style="left:1660px;top:774.5px;width:160px;height:48px;line-height:48px;font-size:17.5px;text-align:center;color:#000;font-weight:400;transform:scaleX(0.962);transform-origin:50% 50%;">2,4000</div>
<div class="a t d" style="left:1820px;top:774.5px;width:160px;height:48px;line-height:48px;font-size:17.5px;text-align:center;color:#000;font-weight:400;transform:scaleX(0.962);transform-origin:50% 50%;">2,4000</div>
<div class="a t d" style="left:1980px;top:774.5px;width:160px;height:48px;line-height:48px;font-size:17.5px;text-align:center;color:#000;font-weight:400;transform:scaleX(0.962);transform-origin:50% 50%;">0,0000</div>
<div class="a t d" style="left:2140px;top:774.5px;width:160px;height:48px;line-height:48px;font-size:17.5px;text-align:center;color:#000;font-weight:400;transform:scaleX(0.962);transform-origin:50% 50%;">3,2000</div>
<svg class="a" style="left:37px;top:774px;" width="10" height="11" viewBox="0 0 10 11"><path d="M0 0 L10 0 L0 10 Z" fill="#1b7a3a"/></svg>
<div class="a" style="left:36px;top:820.5px;width:2268px;height:1px;background:#e3e3e3;"></div>
<div class="a t d" style="left:36.5px;top:822.5px;width:160px;height:48px;line-height:48px;font-size:17.5px;text-align:center;color:#000;font-weight:400;transform:scaleX(0.9248);transform-origin:50% 50%;">15 01 02</div>
<div class="a t d" style="left:196.5px;top:822.5px;width:247.5px;height:48px;line-height:48px;font-size:17.5px;text-align:center;color:#000;font-weight:400;transform:scaleX(1.0092);transform-origin:50% 50%;">Nie</div>
<div class="a t d" style="left:448px;top:822.5px;width:570px;height:48px;line-height:48px;font-size:17.5px;text-align:left;color:#000;font-weight:400;transform:scaleX(0.9727);transform-origin:0 50%;">Opakowania z tworzyw sztucznych</div>
<div class="a t d" style="left:1020px;top:822.5px;width:160px;height:48px;line-height:48px;font-size:17.5px;text-align:center;color:#000;font-weight:400;transform:scaleX(0.962);transform-origin:50% 50%;">0,0000</div>
<div class="a t d" style="left:1180px;top:822.5px;width:160px;height:48px;line-height:48px;font-size:17.5px;text-align:center;color:#000;font-weight:400;transform:scaleX(0.962);transform-origin:50% 50%;">0,7800</div>
<div class="a t d" style="left:1340px;top:822.5px;width:160px;height:48px;line-height:48px;font-size:17.5px;text-align:center;color:#000;font-weight:400;transform:scaleX(0.962);transform-origin:50% 50%;">0,7800</div>
<div class="a t d" style="left:1500px;top:822.5px;width:160px;height:48px;line-height:48px;font-size:17.5px;text-align:center;color:#000;font-weight:400;transform:scaleX(0.962);transform-origin:50% 50%;">0,0000</div>
<div class="a t d" style="left:1660px;top:822.5px;width:160px;height:48px;line-height:48px;font-size:17.5px;text-align:center;color:#000;font-weight:400;transform:scaleX(0.962);transform-origin:50% 50%;">0,0350</div>
<div class="a t d" style="left:1820px;top:822.5px;width:160px;height:48px;line-height:48px;font-size:17.5px;text-align:center;color:#000;font-weight:400;transform:scaleX(0.962);transform-origin:50% 50%;">0,0350</div>
<div class="a t d" style="left:1980px;top:822.5px;width:160px;height:48px;line-height:48px;font-size:17.5px;text-align:center;color:#000;font-weight:400;transform:scaleX(0.962);transform-origin:50% 50%;">0,0000</div>
<div class="a t d" style="left:2140px;top:822.5px;width:160px;height:48px;line-height:48px;font-size:17.5px;text-align:center;color:#000;font-weight:400;transform:scaleX(0.962);transform-origin:50% 50%;">0,4400</div>
<svg class="a" style="left:37px;top:822px;" width="10" height="11" viewBox="0 0 10 11"><path d="M0 0 L10 0 L0 10 Z" fill="#1b7a3a"/></svg>
<div class="a" style="left:36px;top:868.5px;width:2268px;height:1px;background:#e3e3e3;"></div>
<div class="a t d" style="left:36.5px;top:870.5px;width:160px;height:48px;line-height:48px;font-size:17.5px;text-align:center;color:#000;font-weight:400;transform:scaleX(0.9542);transform-origin:50% 50%;">15 01 10*</div>
<div class="a t d" style="left:196.5px;top:870.5px;width:247.5px;height:48px;line-height:48px;font-size:17.5px;text-align:center;color:#000;font-weight:400;transform:scaleX(0.9731);transform-origin:50% 50%;">Tak</div>
<div class="a t d" style="left:448px;top:858.0px;width:570px;height:48px;line-height:48px;font-size:17.5px;text-align:left;color:#000;font-weight:400;transform:scaleX(0.9929);transform-origin:0 50%;">Opakowania zawierające pozostałości substancji niebezpiecznych lub</div>
<div class="a t d" style="left:448px;top:883.0px;width:570px;height:48px;line-height:48px;font-size:17.5px;text-align:left;color:#000;font-weight:400;transform:scaleX(0.975);transform-origin:0 50%;">nimi zanieczyszczone</div>
<div class="a t d" style="left:1020px;top:870.5px;width:160px;height:48px;line-height:48px;font-size:17.5px;text-align:center;color:#000;font-weight:400;transform:scaleX(0.962);transform-origin:50% 50%;">0,1200</div>
<div class="a t d" style="left:1180px;top:870.5px;width:160px;height:48px;line-height:48px;font-size:17.5px;text-align:center;color:#000;font-weight:400;transform:scaleX(0.962);transform-origin:50% 50%;">0,0000</div>
<div class="a t d" style="left:1340px;top:870.5px;width:160px;height:48px;line-height:48px;font-size:17.5px;text-align:center;color:#000;font-weight:400;transform:scaleX(0.962);transform-origin:50% 50%;">0,1200</div>
<div class="a t d" style="left:1500px;top:870.5px;width:160px;height:48px;line-height:48px;font-size:17.5px;text-align:center;color:#000;font-weight:400;transform:scaleX(0.962);transform-origin:50% 50%;">0,0000</div>
<div class="a t d" style="left:1660px;top:870.5px;width:160px;height:48px;line-height:48px;font-size:17.5px;text-align:center;color:#000;font-weight:400;transform:scaleX(0.962);transform-origin:50% 50%;">0,0000</div>
<div class="a t d" style="left:1820px;top:870.5px;width:160px;height:48px;line-height:48px;font-size:17.5px;text-align:center;color:#000;font-weight:400;transform:scaleX(0.962);transform-origin:50% 50%;">0,0000</div>
<div class="a t d" style="left:1980px;top:870.5px;width:160px;height:48px;line-height:48px;font-size:17.5px;text-align:center;color:#000;font-weight:400;transform:scaleX(0.962);transform-origin:50% 50%;">0,0000</div>
<div class="a t d" style="left:2140px;top:870.5px;width:160px;height:48px;line-height:48px;font-size:17.5px;text-align:center;color:#000;font-weight:400;transform:scaleX(0.962);transform-origin:50% 50%;">0,0000</div>
<div class="a" style="left:36px;top:916.5px;width:2268px;height:1px;background:#e3e3e3;"></div>
<div class="a t d" style="left:36.5px;top:918.5px;width:160px;height:48px;line-height:48px;font-size:17.5px;text-align:center;color:#000;font-weight:400;transform:scaleX(0.9542);transform-origin:50% 50%;">15 02 02*</div>
<div class="a t d" style="left:196.5px;top:918.5px;width:247.5px;height:48px;line-height:48px;font-size:17.5px;text-align:center;color:#000;font-weight:400;transform:scaleX(0.9731);transform-origin:50% 50%;">Tak</div>
<div class="a t d" style="left:448px;top:906.0px;width:570px;height:48px;line-height:48px;font-size:17.5px;text-align:left;color:#000;font-weight:400;transform:scaleX(1.0012);transform-origin:0 50%;">Sorbenty, materiały filtracyjne (w tym filtry olejowe nieujęte w innych</div>
<div class="a t d" style="left:448px;top:931.0px;width:570px;height:48px;line-height:48px;font-size:17.5px;text-align:left;color:#000;font-weight:400;transform:scaleX(0.9836);transform-origin:0 50%;">grupach), tkaniny do wycierania (np. szmaty, ścierki) i ubrania ochronne</div>
<div class="a t d" style="left:1020px;top:918.5px;width:160px;height:48px;line-height:48px;font-size:17.5px;text-align:center;color:#000;font-weight:400;transform:scaleX(0.962);transform-origin:50% 50%;">0,0000</div>
<div class="a t d" style="left:1180px;top:918.5px;width:160px;height:48px;line-height:48px;font-size:17.5px;text-align:center;color:#000;font-weight:400;transform:scaleX(0.962);transform-origin:50% 50%;">0,0000</div>
<div class="a t d" style="left:1340px;top:918.5px;width:160px;height:48px;line-height:48px;font-size:17.5px;text-align:center;color:#000;font-weight:400;transform:scaleX(0.962);transform-origin:50% 50%;">0,0000</div>
<div class="a t d" style="left:1500px;top:918.5px;width:160px;height:48px;line-height:48px;font-size:17.5px;text-align:center;color:#000;font-weight:400;transform:scaleX(0.962);transform-origin:50% 50%;">0,0000</div>
<div class="a t d" style="left:1660px;top:918.5px;width:160px;height:48px;line-height:48px;font-size:17.5px;text-align:center;color:#000;font-weight:400;transform:scaleX(0.962);transform-origin:50% 50%;">0,0000</div>
<div class="a t d" style="left:1820px;top:918.5px;width:160px;height:48px;line-height:48px;font-size:17.5px;text-align:center;color:#000;font-weight:400;transform:scaleX(0.962);transform-origin:50% 50%;">0,0000</div>
<div class="a t d" style="left:1980px;top:918.5px;width:160px;height:48px;line-height:48px;font-size:17.5px;text-align:center;color:#000;font-weight:400;transform:scaleX(0.962);transform-origin:50% 50%;">0,0000</div>
<div class="a t d" style="left:2140px;top:918.5px;width:160px;height:48px;line-height:48px;font-size:17.5px;text-align:center;color:#000;font-weight:400;transform:scaleX(0.962);transform-origin:50% 50%;">0,0000</div>
<div class="a" style="left:36px;top:964.5px;width:2268px;height:1px;background:#e3e3e3;"></div>
<div class="a t d" style="left:36.5px;top:966.5px;width:160px;height:48px;line-height:48px;font-size:17.5px;text-align:center;color:#000;font-weight:400;transform:scaleX(0.9248);transform-origin:50% 50%;">16 02 14</div>
<div class="a t d" style="left:196.5px;top:966.5px;width:247.5px;height:48px;line-height:48px;font-size:17.5px;text-align:center;color:#000;font-weight:400;transform:scaleX(1.0092);transform-origin:50% 50%;">Nie</div>
<div class="a t d" style="left:448px;top:966.5px;width:570px;height:48px;line-height:48px;font-size:17.5px;text-align:left;color:#000;font-weight:400;transform:scaleX(0.9519);transform-origin:0 50%;">Zużyte urządzenia inne niż wymienione w 16 02 09 do 16 02 13</div>
<div class="a t d" style="left:1020px;top:966.5px;width:160px;height:48px;line-height:48px;font-size:17.5px;text-align:center;color:#000;font-weight:400;transform:scaleX(0.962);transform-origin:50% 50%;">0,0000</div>
<div class="a t d" style="left:1180px;top:966.5px;width:160px;height:48px;line-height:48px;font-size:17.5px;text-align:center;color:#000;font-weight:400;transform:scaleX(0.962);transform-origin:50% 50%;">0,0000</div>
<div class="a t d" style="left:1340px;top:966.5px;width:160px;height:48px;line-height:48px;font-size:17.5px;text-align:center;color:#000;font-weight:400;transform:scaleX(0.962);transform-origin:50% 50%;">0,0000</div>
<div class="a t d" style="left:1500px;top:966.5px;width:160px;height:48px;line-height:48px;font-size:17.5px;text-align:center;color:#000;font-weight:400;transform:scaleX(0.962);transform-origin:50% 50%;">0,0000</div>
<div class="a t d" style="left:1660px;top:966.5px;width:160px;height:48px;line-height:48px;font-size:17.5px;text-align:center;color:#000;font-weight:400;transform:scaleX(0.962);transform-origin:50% 50%;">0,1160</div>
<div class="a t d" style="left:1820px;top:966.5px;width:160px;height:48px;line-height:48px;font-size:17.5px;text-align:center;color:#000;font-weight:400;transform:scaleX(0.962);transform-origin:50% 50%;">0,1160</div>
<div class="a t d" style="left:1980px;top:966.5px;width:160px;height:48px;line-height:48px;font-size:17.5px;text-align:center;color:#000;font-weight:400;transform:scaleX(0.962);transform-origin:50% 50%;">0,0000</div>
<div class="a t d" style="left:2140px;top:966.5px;width:160px;height:48px;line-height:48px;font-size:17.5px;text-align:center;color:#000;font-weight:400;transform:scaleX(0.962);transform-origin:50% 50%;">0,3110</div>
<svg class="a" style="left:37px;top:966px;" width="10" height="11" viewBox="0 0 10 11"><path d="M0 0 L10 0 L0 10 Z" fill="#1b7a3a"/></svg>
<div class="a" style="left:195.5px;top:629px;width:1px;height:384.75px;background:#e3e3e3;"></div>
<div class="a" style="left:443.0px;top:629px;width:1px;height:384.75px;background:#e3e3e3;"></div>
<div class="a" style="left:1179.5px;top:629px;width:1px;height:384.75px;background:#e3e3e3;"></div>
<div class="a" style="left:1339.5px;top:629px;width:1px;height:384.75px;background:#e3e3e3;"></div>
<div class="a" style="left:1499px;top:629px;width:2px;height:384.75px;background:#2a2a2a;"></div>
<div class="a" style="left:1659.5px;top:629px;width:1px;height:384.75px;background:#e3e3e3;"></div>
<div class="a" style="left:1819.5px;top:629px;width:1px;height:384.75px;background:#e3e3e3;"></div>
<div class="a" style="left:1979px;top:629px;width:2px;height:384.75px;background:#2a2a2a;"></div>
<div class="a" style="left:2139.5px;top:629px;width:1px;height:384.75px;background:#e3e3e3;"></div>
<div class="a" style="left:2299.5px;top:629px;width:1px;height:384.75px;background:#e3e3e3;"></div>
<div class="a" style="left:36px;top:1038.3px;width:2268px;height:1.5px;background:#cdcdcd;"></div>
<div class="a" style="left:36px;top:1113.7px;width:2268px;height:1.5px;background:#cdcdcd;"></div>
<div class="a" style="left:36px;top:1139.3px;width:2268px;height:1.5px;background:#cdcdcd;"></div>
<div class="a" style="left:36px;top:1164.8999999999999px;width:2268px;height:1.5px;background:#cdcdcd;"></div>
<div class="a" style="left:36px;top:1190.5px;width:2268px;height:1.5px;background:#cdcdcd;"></div>
<div class="a" style="left:36px;top:1216.1px;width:2268px;height:1.5px;background:#cdcdcd;"></div>
<div class="a" style="left:36px;top:1241.7px;width:2268px;height:1.5px;background:#cdcdcd;"></div>
<div class="a" style="left:36px;top:1267.3px;width:2268px;height:1.5px;background:#cdcdcd;"></div>
<div class="a" style="left:36px;top:1292.8999999999999px;width:2268px;height:1.5px;background:#cdcdcd;"></div>
<div class="a" style="left:36px;top:1318.5px;width:2268px;height:1.5px;background:#cdcdcd;"></div>
<div class="a" style="left:36px;top:1344.1px;width:2268px;height:1.5px;background:#cdcdcd;"></div>
<div class="a" style="left:195.3px;top:1013.5px;width:1.5px;height:348.5px;background:#cdcdcd;"></div>
<div class="a" style="left:442.8px;top:1013.5px;width:1.5px;height:348.5px;background:#cdcdcd;"></div>
<div class="a" style="left:1179.3px;top:1013.5px;width:1.5px;height:348.5px;background:#cdcdcd;"></div>
<div class="a" style="left:1339.3px;top:1013.5px;width:1.5px;height:348.5px;background:#cdcdcd;"></div>
<div class="a" style="left:1499.3px;top:1013.5px;width:1.5px;height:348.5px;background:#cdcdcd;"></div>
<div class="a" style="left:1659.3px;top:1013.5px;width:1.5px;height:348.5px;background:#cdcdcd;"></div>
<div class="a" style="left:1819.3px;top:1013.5px;width:1.5px;height:348.5px;background:#cdcdcd;"></div>
<div class="a" style="left:1979.3px;top:1013.5px;width:1.5px;height:348.5px;background:#cdcdcd;"></div>
<div class="a" style="left:2139.3px;top:1013.5px;width:1.5px;height:348.5px;background:#cdcdcd;"></div>
<div class="a" style="left:2299.3px;top:1013.5px;width:1.5px;height:348.5px;background:#cdcdcd;"></div>
<div class="a" style="left:36px;top:1064px;width:2268px;height:25.299999999999955px;background:#5c7dae;"></div>
<div class="a t " style="left:41px;top:1064px;width:400px;height:25.299999999999955px;line-height:25.299999999999955px;font-size:14px;text-align:left;color:#fff;font-weight:400;transform:scaleX(0.9925);transform-origin:0 50%;">Copyright © 2025 CARBOmath</div>
<div class="a" style="left:1018.9px;top:275px;width:1.9px;height:1087px;background:#979797;"></div>
<div class="a" style="left:34.4px;top:307.4px;width:411.8px;height:36.6px;border:2.7px solid #1e6b3c;"></div>
<div class="a" style="left:37.1px;top:310.1px;width:406.4px;height:31.2px;border:1px solid #e6f0fb;"></div>
<div class="a" style="left:438.6px;top:336.6px;width:9.4px;height:9.4px;background:#1e6b3c;border-left:1.5px solid #fff;border-top:1.5px solid #fff;"></div>
<div class="a" style="left:40px;top:1344.8px;width:458px;height:12px;background:#8d8d8d;border-radius:6px;opacity:.9;"></div>
<div class="a" style="left:0;top:1344px;width:36px;height:18px;overflow:hidden;"><div class="a t" style="left:0;top:2.5px;width:36px;height:22px;line-height:22px;font-size:16.5px;text-align:center;color:#444;transform:scaleX(1);">31</div></div>
<div class="a" style="left:0px;top:1362px;width:2304px;height:40.5px;background:#ececec;background:linear-gradient(#f0f0f0,#e9e9e9);"></div>
<div class="a" style="left:0px;top:1361.5px;width:2304px;height:1px;background:#cfcfcf;"></div>
<svg class="a" style="left:0px;top:0px;" width="1" height="1" viewBox="0 0 1 1"><path d="M35 1375.5 L35 1391 L23.8 1383.2 Z" fill="#c0c0c0"/><path d="M61 1375.5 L61 1391 L72.5 1383.2 Z" fill="#444"/></svg>
<div class="a" style="left:95.55px;top:1364px;width:1.5px;height:32px;background:#cfcfcf;"></div>
<div class="a" style="left:103.8px;top:1366px;width:326.7px;height:32px;background:#dbe5f3;"></div>
<div class="a t " style="left:131.8px;top:1369.8px;width:257.44925344925343px;height:26px;line-height:26px;font-size:18.5px;text-align:left;color:#0a0a0a;font-weight:400;transform:scaleX(1.0582);transform-origin:0 50%;-webkit-text-stroke:0.45px #0a0a0a;">0001 Przegląd stat. KPO 07'25</div>
<div class="a" style="left:434.75px;top:1364px;width:1.5px;height:32px;background:#cfcfcf;"></div>
<div class="a" style="left:441.7px;top:1366px;width:327.7px;height:32px;background:#dbe5f3;"></div>
<div class="a t " style="left:471.2px;top:1369.8px;width:256.41806742417134px;height:26px;line-height:26px;font-size:18.5px;text-align:left;color:#0a0a0a;font-weight:400;transform:scaleX(1.0649);transform-origin:0 50%;-webkit-text-stroke:0.45px #0a0a0a;">0001 Potwierdzone KPO 07'25</div>
<div class="a" style="left:774.25px;top:1364px;width:1.5px;height:32px;background:#cfcfcf;"></div>
<div class="a" style="left:781px;top:1366px;width:264px;height:32px;background:#dbe5f3;"></div>
<div class="a t " style="left:807.2px;top:1369.8px;width:203.5381951125649px;height:26px;line-height:26px;font-size:18.5px;text-align:left;color:#0a0a0a;font-weight:400;transform:scaleX(1.0394);transform-origin:0 50%;-webkit-text-stroke:0.45px #0a0a0a;">0001 KEO Roczne 2024</div>
<div class="a" style="left:1047px;top:1361px;width:360.5px;height:37px;background:#f8f8f8;border:1px solid #c9c9c9;border-top:none;border-radius:0 0 7px 7px;box-shadow:0 1px 2px rgba(0,0,0,.2);"></div>
<div class="a" style="left:1048px;top:1361px;width:358.5px;height:3px;background:#fbfbfb;"></div>
<div class="a t " style="left:1082.8px;top:1369.8px;width:281.9915352058484px;height:26px;line-height:26px;font-size:18.5px;text-align:left;color:#2e7d46;font-weight:700;transform:scaleX(1.0396);transform-origin:0 50%;">0001 Zestaw. odpad_mies. 2024</div>
<div class="a" style="left:1413px;top:1366px;width:326.5px;height:32px;background:#dbe5f3;"></div>
<div class="a t " style="left:1442px;top:1369.8px;width:255.98562783661117px;height:26px;line-height:26px;font-size:18.5px;text-align:left;color:#0a0a0a;font-weight:400;transform:scaleX(1.0576);transform-origin:0 50%;-webkit-text-stroke:0.45px #0a0a0a;">0001 Zestawienie roczne 2024</div>
<div class="a" style="left:1743.75px;top:1364px;width:1.5px;height:32px;background:#cfcfcf;"></div>
<div class="a t " style="left:1778.5px;top:1369.8px;width:221.9798356982823px;height:26px;line-height:26px;font-size:18.5px;text-align:left;color:#0a0a0a;font-weight:400;transform:scaleX(1.0712);transform-origin:0 50%;-webkit-text-stroke:0.45px #0a0a0a;">SŁOWNIK-Kody Odpadów</div>
<div class="a" style="left:2044.75px;top:1364px;width:1.5px;height:32px;background:#cfcfcf;"></div>
<div class="a" style="left:2070px;top:1366px;width:117px;height:32px;overflow:hidden;"><div class="a t" style="left:9.5px;top:3px;height:26px;line-height:26px;font-size:18.5px;color:#0a0a0a;-webkit-text-stroke:.45px #0a0a0a;transform:scaleX(1.0355);transform-origin:0 50%;">SŁOWNIK-P</div><div class="a" style="left:60px;top:0;width:57px;height:32px;background:linear-gradient(90deg,rgba(236,236,236,0),rgba(236,236,236,.85));"></div></div>
<div class="a" style="left:2193.75px;top:1364px;width:1.5px;height:32px;background:#cfcfcf;"></div>
<svg class="a" style="left:0px;top:0px;" width="1" height="1" viewBox="0 0 1 1"><path d="M2217 1381.8 L2234.5 1381.8 M2225.7 1373 L2225.7 1390.5" stroke="#333" stroke-width="2.4"/></svg>
<div class="a" style="left:2254.75px;top:1364px;width:1.5px;height:32px;background:#cfcfcf;"></div>
<div class="a" style="left:0px;top:1402.5px;width:2304px;height:37.5px;background:#dcdcdc;background:linear-gradient(#e4e4e4,#d4d4d4);"></div>
<div class="a" style="left:0px;top:1402px;width:2304px;height:1.2px;background:#bcbcbc;"></div>
<div class="a t " style="left:39.3px;top:1409.8px;width:66.71646541233736px;height:26px;line-height:26px;font-size:18.5px;text-align:left;color:#5e5e5e;font-weight:400;transform:scaleX(1.0683);transform-origin:0 50%;-webkit-text-stroke:0.15px #5e5e5e;">Gotowy</div>
<svg class="a" style="left:0px;top:0px;" width="1" height="1" viewBox="0 0 1 1"><g fill="none" stroke="#666" stroke-width="1.5" stroke-linecap="round" stroke-linejoin="round"><circle cx="148.7" cy="1413.2" r="2.6"/><path d="M139.5 1416.5 Q144 1419 148.7 1419 Q153.5 1419 158 1416.5 M145.5 1419 L145 1424 L141.5 1431.5 M152 1419 L152.3 1423.5 M148.7 1424.5 L148.7 1427"/><path d="M151.5 1425 L160.5 1432 M160.5 1425 L151.5 1432"/></g></svg>
<div class="a t " style="left:167.5px;top:1409.8px;width:225.1137311808453px;height:26px;line-height:26px;font-size:18.5px;text-align:left;color:#5e5e5e;font-weight:400;transform:scaleX(1.1026);transform-origin:0 50%;-webkit-text-stroke:0.15px #5e5e5e;">Ułatwienia dostępu: zbadaj</div>
<svg class="a" style="left:0px;top:0px;" width="1" height="1" viewBox="0 0 1 1"><g fill="#5a5a5a"><path d="M1481 1411 L1490 1409.5 L1494.5 1413 L1494.5 1424.5 L1485 1426 L1481 1422.5 Z"/><path d="M1470 1420.5 L1477 1417 L1483 1420.5 L1483 1428.5 L1476.5 1432 L1470 1428.5 Z"/></g><path d="M1481 1411 L1485.2 1414.6 L1494.5 1413 M1485.2 1414.6 L1485 1426" fill="none" stroke="#dcdcdc" stroke-width="1"/></svg>
<div class="a t " style="left:1500.5px;top:1409.8px;width:258.01929260450163px;height:26px;line-height:26px;font-size:18.5px;text-align:left;color:#5e5e5e;font-weight:400;transform:scaleX(1.0885);transform-origin:0 50%;-webkit-text-stroke:0.15px #5e5e5e;">Pomyślnie załadowano dodatki</div>
<div class="a" style="left:1794.5px;top:1403px;width:57.5px;height:37px;background:#b9b9b9;"></div>
<svg class="a" style="left:0px;top:0px;" width="1" height="1" viewBox="0 0 1 1"><g fill="none" stroke="#fff" stroke-width="1.7"><rect x="1813.5" y="1412" width="19" height="19"/><path d="M1819.8 1412 L1819.8 1431 M1826.2 1412 L1826.2 1431 M1813.5 1418.3 L1832.5 1418.3 M1813.5 1424.7 L1832.5 1424.7"/></g></svg>
<svg class="a" style="left:0px;top:0px;" width="1" height="1" viewBox="0 0 1 1"><g fill="none" stroke="#555" stroke-width="1.6"><rect x="1871.3" y="1412" width="20" height="19" rx="1"/><rect x="1875.5" y="1415.8" width="11.5" height="11.5"/><path d="M1878 1419.3 L1884.5 1419.3 M1878 1421.8 L1884.5 1421.8 M1878 1424.3 L1884.5 1424.3" stroke-width="1"/></g></svg>
<svg class="a" style="left:0px;top:0px;" width="1" height="1" viewBox="0 0 1 1"><g fill="none" stroke="#555" stroke-width="1.7"><rect x="1926.8" y="1412" width="21" height="19"/><path d="M1926.8 1423 L1947.8 1423 M1933.5 1412 L1933.5 1423 M1940.5 1412 L1940.5 1423"/></g></svg>
<svg class="a" style="left:0px;top:0px;" width="1" height="1" viewBox="0 0 1 1"><path d="M1979.5 1422 L1992 1422" stroke="#555" stroke-width="2.4"/><path d="M2174.5 1422 L2187 1422 M2180.8 1415.8 L2180.8 1428.2" stroke="#555" stroke-width="2.4"/></svg>
<div class="a" style="left:2003.5px;top:1419px;width:158.5px;height:6px;background:#b3b3b3;border-radius:3px;"></div>
<div class="a" style="left:2069.5px;top:1409.5px;width:25px;height:25px;background:#fbfbfb;border-radius:50%;box-shadow:0 1px 3px rgba(0,0,0,.4);"></div>
<div class="a t " style="left:2215.5px;top:1409.8px;width:51.31556585554268px;height:26px;line-height:26px;font-size:18.5px;text-align:left;color:#5e5e5e;font-weight:400;transform:scaleX(1.0356);transform-origin:0 50%;-webkit-text-stroke:0.15px #5e5e5e;">100%</div>
<svg class="a" style="left:0px;top:0px;" width="1" height="1" viewBox="0 0 1 1"><path d="M1136.5 1385.5 L1136.5 1408 L1141.8 1403.2 L1145.6 1411.8 L1149 1410.2 L1145.2 1401.8 L1152.2 1401.3 Z" fill="#000" stroke="#fff" stroke-width="1.6" stroke-linejoin="round"/></svg>
</body></html>
